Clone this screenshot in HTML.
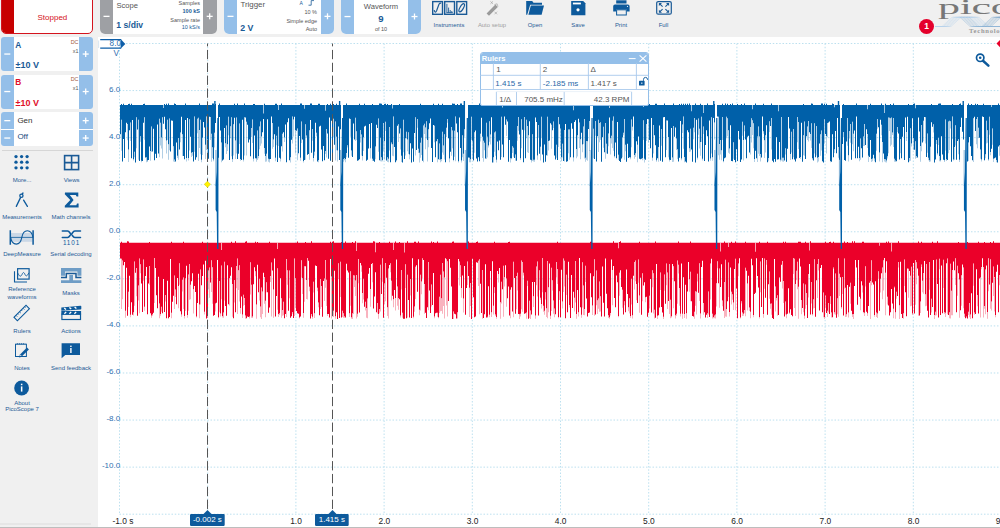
<!DOCTYPE html>
<html><head><meta charset="utf-8">
<style>
*{margin:0;padding:0;box-sizing:border-box}
html,body{width:1000px;height:528px;overflow:hidden;background:#f0f0f0;font-family:"Liberation Sans",sans-serif}
.a{position:absolute;white-space:nowrap}
.btn{position:absolute;background:#94bfe9}
.gbtn{position:absolute;background:#9ea0a4}
.mi{position:absolute;height:1.6px;background:#fff}
.pl{position:absolute;background:#fff}
.t{position:absolute;white-space:nowrap;line-height:1}
.lbl{position:absolute;white-space:nowrap;line-height:1;font-size:6px;color:#1e5a96;text-align:center}
svg{position:absolute;left:0;top:0}
</style></head><body>

<!-- Stopped -->
<div class="a" style="left:1px;top:-6px;width:92px;height:40px;border:1px solid #d4141e;border-radius:5px;background:#fff;overflow:hidden">
  <div style="position:absolute;left:0;top:0;width:12px;height:40px;background:#c70000"></div>
</div>
<div class="t" style="left:37.5px;top:13.6px;font-size:8px;color:#d41020">Stopped</div>

<!-- Scope -->
<div class="a" style="left:100px;top:-6px;width:116.5px;height:39.8px;border-radius:5px;background:#fff;overflow:hidden">
  <div class="gbtn" style="left:0;top:0;width:13px;height:40px"></div>
  <div class="gbtn" style="left:103px;top:0;width:13.5px;height:40px"></div>
</div>
<div class="t" style="left:116.5px;top:1.6px;font-size:7.6px;color:#555">Scope</div>
<div class="t" style="left:116.3px;top:21.2px;font-size:8.6px;color:#1a5a96;font-weight:bold">1 s/div</div>
<div class="t" style="left:150px;width:50px;top:0.5px;font-size:5.5px;color:#555;text-align:right">Samples</div>
<div class="t" style="left:150px;width:50px;top:9.1px;font-size:5.5px;color:#1a5a96;text-align:right;font-weight:bold">100 kS</div>
<div class="t" style="left:150px;width:50px;top:18.3px;font-size:5.5px;color:#555;text-align:right">Sample rate</div>
<div class="t" style="left:150px;width:50px;top:25.1px;font-size:5.5px;color:#1a5a96;text-align:right">10 kS/s</div>

<!-- Trigger -->
<div class="a" style="left:224px;top:-6px;width:110px;height:39.8px;border-radius:5px;background:#fff;overflow:hidden">
  <div class="btn" style="left:0;top:0;width:13px;height:40px"></div>
  <div class="btn" style="left:97px;top:0;width:13px;height:40px"></div>
</div>
<div class="t" style="left:240.4px;top:1.2px;font-size:7.9px;color:#555">Trigger</div>
<div class="t" style="left:240.2px;top:24.4px;font-size:8.8px;color:#1a5a96;font-weight:bold">2 V</div>
<div class="t" style="left:299.5px;top:0.8px;font-size:5px;color:#1a5a96">A</div>
<svg width="1000" height="40" style="left:0;top:0"><path d="M308.5 5.2H311.2V0.6H314" fill="none" stroke="#1a5a96" stroke-width="0.8"/></svg>
<div class="t" style="left:267px;width:50px;top:10px;font-size:5.5px;color:#555;text-align:right">10 %</div>
<div class="t" style="left:267px;width:50px;top:19px;font-size:5.5px;color:#555;text-align:right">Simple edge</div>
<div class="t" style="left:267px;width:50px;top:27.1px;font-size:5.5px;color:#555;text-align:right">Auto</div>

<!-- Waveform -->
<div class="a" style="left:341px;top:-6px;width:80px;height:39.8px;border-radius:5px;background:#fff;overflow:hidden">
  <div class="btn" style="left:0;top:0;width:13px;height:40px"></div>
  <div class="btn" style="left:67px;top:0;width:13px;height:40px"></div>
</div>
<div class="t" style="left:341px;width:80px;top:2.8px;font-size:7.6px;color:#555;text-align:center">Waveform</div>
<div class="t" style="left:341px;width:80px;top:14.2px;font-size:9.6px;color:#1a5a96;text-align:center;font-weight:bold">9</div>
<div class="t" style="left:341px;width:80px;top:26.5px;font-size:5.5px;color:#555;text-align:center">of 10</div>

<!-- plus/minus glyphs on toolbar -->
<svg width="1000" height="150" style="left:0;top:0" fill="#fff">
  <rect x="103.5" y="15.7" width="6" height="1.3"/>
  <rect x="206.7" y="15.7" width="6" height="1.3"/><rect x="209.05" y="13.3" width="1.3" height="6"/>
  <rect x="227.5" y="15.7" width="6" height="1.3"/>
  <rect x="324.5" y="15.7" width="6" height="1.3"/><rect x="326.85" y="13.3" width="1.3" height="6"/>
  <rect x="344.5" y="15.9" width="6" height="1.3"/>
  <rect x="411.5" y="15.9" width="6" height="1.3"/><rect x="413.85" y="13.5" width="1.3" height="6"/>
</svg>

<!-- toolbar icons -->
<svg width="1000" height="36" style="left:0;top:0">
  <g fill="none" stroke="#1a5a96" stroke-width="1.4">
    <rect x="432.7" y="1.6" width="9.8" height="12.7"/>
    <rect x="444.7" y="1.6" width="9.8" height="12.7"/>
    <rect x="456.8" y="1.6" width="9.8" height="12.7"/>
  </g>
  <g fill="none" stroke="#1a5a96" stroke-width="1.2">
    <path d="M434.2 10.2Q435.2 14 436.6 10.8L438.8 4.8Q439.6 2.6 441.2 3.4"/>
    <path d="M446.9 12.6V3.8M448.6 12.6V7.6M450.2 12.6V10M451.8 12.6V11M446.4 12.6H452.8" stroke-width="0.9"/>
    <ellipse cx="461.7" cy="7.8" rx="1.7" ry="4.6" transform="rotate(30 461.7 7.8)"/>
  </g>
  <!-- auto setup -->
  <g>
    <path d="M486.6 13.4L495.4 4.6L497.8 7L489 15.8Z" fill="#9a9a9a"/>
    <path d="M494.4 4.6L497.1 3.8L498 6.6" fill="none" stroke="#9a9a9a" stroke-width="0.6"/>
    <path d="M490.4 1.3L493 3.9M493 1.3L490.4 3.9M494.5 11.7L497.1 14.3M497.1 11.7L494.5 14.3" stroke="#9a9a9a" stroke-width="0.6"/>
  </g>
  <!-- open -->
  <path d="M526.2 14.8V1H532.2L533.5 2.7H542V4.7H530.2L527.2 14.8Z" fill="#0d5a9c"/>
  <path d="M528.4 14.8L530.8 5.6H544L541.6 14.8Z" fill="#0d5a9c"/>
  <!-- save -->
  <path d="M571.2 1H583.2L585.4 3.2V15.2H571.2Z" fill="#0d5a9c"/>
  <rect x="572.9" y="2.6" width="8" height="1.8" fill="#fff"/>
  <circle cx="578" cy="9.8" r="1.6" fill="#fff"/>
  <!-- print -->
  <rect x="616.2" y="0.3" width="10.3" height="3.2" fill="#0d5a9c"/>
  <path d="M613.2 6.2Q613.2 4.4 615 4.4H627.8Q629.6 4.4 629.6 6.2V11.4H626.7V9.4H616.1V11.4H613.2Z" fill="#0d5a9c"/>
  <rect x="616.6" y="9.8" width="9.7" height="5.2" fill="none" stroke="#0d5a9c" stroke-width="1"/>
  <circle cx="627.5" cy="6.3" r="0.6" fill="#fff"/>
  <!-- full -->
  <rect x="656.7" y="1.6" width="14.6" height="12.6" rx="1.5" fill="none" stroke="#1a5a96" stroke-width="1.2"/>
  <g fill="#1a5a96">
    <path d="M658.9 3H662L658.9 6.1Z"/><path d="M669.1 3H666L669.1 6.1Z"/>
    <path d="M658.9 12.8H662L658.9 9.7Z"/><path d="M669.1 12.8H666L669.1 9.7Z"/>
  </g>
  <g stroke="#1a5a96" stroke-width="1.1" fill="none">
    <path d="M660 4.1L662.6 6.7M668 4.1L665.4 6.7M660 11.7L662.6 9.1M668 11.7L665.4 9.1"/>
  </g>
</svg>
<div class="lbl" style="left:419px;width:60px;top:22.5px;font-size:5.9px">Instruments</div>
<div class="lbl" style="left:462px;width:60px;top:22.5px;font-size:5.9px;color:#a0a0a0">Auto setup</div>
<div class="lbl" style="left:505px;width:60px;top:22.5px;font-size:5.9px">Open</div>
<div class="lbl" style="left:548px;width:60px;top:22.5px;font-size:5.9px">Save</div>
<div class="lbl" style="left:591px;width:60px;top:22.5px;font-size:5.9px">Print</div>
<div class="lbl" style="left:633.5px;width:60px;top:22.5px;font-size:5.9px">Full</div>

<!-- pico logo -->
<svg width="70" height="36" style="left:930px;top:0">
  <g fill="none" stroke-width="0.4">
    <path d="M5 26.5H12.0L22.0 17.3H40.0L50.0 26.5H72" stroke="#b5d2ea"/>
    <path d="M5 26.5H13.5L23.5 17.3H41.5L51.5 26.5H72" stroke="#b5d2ea"/>
    <path d="M5 26.5H15.0L25.0 17.3H43.0L53.0 26.5H72" stroke="#b5d2ea"/>
    <path d="M5 26.5H16.5L26.5 17.3H44.5L54.5 26.5H72" stroke="#b5d2ea"/>
    <path d="M5 26.5H18.0L28.0 17.3H46.0L56.0 26.5H72" stroke="#b5d2ea"/>
    <path d="M5 26.5H19.5L29.5 17.3H47.5L57.5 26.5H72" stroke="#b5d2ea"/>
    <path d="M5 26.5H21.0L31.0 17.3H49.0L59.0 26.5H72" stroke="#b5d2ea"/>
    <path d="M30.0 17.3L40.0 26.5H72" stroke="#8fb5d6"/>
    <path d="M31.5 17.3L41.5 26.5H72" stroke="#8fb5d6"/>
    <path d="M33.0 17.3L43.0 26.5H72" stroke="#8fb5d6"/>
    <path d="M34.5 17.3L44.5 26.5H72" stroke="#8fb5d6"/>
    <path d="M36.0 17.3L46.0 26.5H72" stroke="#8fb5d6"/>
    <path d="M37.5 17.3L47.5 26.5H72" stroke="#8fb5d6"/>
    <path d="M39.0 17.3L49.0 26.5H72" stroke="#8fb5d6"/>
    <path d="M52.0 26.5L62.0 17.3H72" stroke="#7fa8cc"/>
    <path d="M53.5 26.5L63.5 17.3H72" stroke="#7fa8cc"/>
    <path d="M55.0 26.5L65.0 17.3H72" stroke="#7fa8cc"/>
    <path d="M56.5 26.5L66.5 17.3H72" stroke="#7fa8cc"/>
    <path d="M58.0 26.5L68.0 17.3H72" stroke="#7fa8cc"/>
    <path d="M59.5 26.5L69.5 17.3H72" stroke="#7fa8cc"/>
    <path d="M61.0 26.5L71.0 17.3H72" stroke="#7fa8cc"/>
  </g>
</svg>
<div class="t" style="left:937.8px;top:-3.85px;font-family:'Liberation Serif',serif;font-size:22px;color:#777;transform:scaleX(2.0);transform-origin:0 0;letter-spacing:-0.15px">pico</div>
<div class="t" style="left:969px;top:27.6px;font-family:'Liberation Serif',serif;font-weight:bold;font-size:6.6px;color:#9a9a9a;letter-spacing:0.75px">Technology</div>
<div class="a" style="left:919.2px;top:19.1px;width:15px;height:15px;border-radius:50%;background:#e4002b"></div>
<div class="t" style="left:919.2px;width:15px;top:22.3px;font-size:8.5px;font-weight:bold;color:#fff;text-align:center">1</div>

<!-- Channel A -->
<div class="a" style="left:1px;top:37px;width:92px;height:34px;border-radius:3px;background:#fff;overflow:hidden">
  <div class="btn" style="left:0;top:0;width:13px;height:34px"></div>
  <div class="btn" style="left:78px;top:0;width:14px;height:34px"></div>
</div>
<div class="t" style="left:15.2px;top:40.5px;font-size:8.3px;font-weight:bold;color:#1a5a96">A</div>
<div class="t" style="left:15.5px;top:60.5px;font-size:9px;font-weight:bold;color:#1a5a96">±10 V</div>
<div class="t" style="left:40px;width:38.5px;top:39.5px;font-size:5.4px;color:#a0583c;text-align:right">DC</div>
<div class="t" style="left:40px;width:38.5px;top:48.5px;font-size:5.4px;color:#555;text-align:right">x1</div>

<!-- Channel B -->
<div class="a" style="left:1px;top:74.5px;width:92px;height:34px;border-radius:3px;background:#fff;overflow:hidden">
  <div class="btn" style="left:0;top:0;width:13px;height:34px"></div>
  <div class="btn" style="left:78px;top:0;width:14px;height:34px"></div>
</div>
<div class="t" style="left:15.2px;top:78.2px;font-size:8.3px;font-weight:bold;color:#e0102a">B</div>
<div class="t" style="left:15.5px;top:99px;font-size:9px;font-weight:bold;color:#e0102a">±10 V</div>
<div class="t" style="left:40px;width:38.5px;top:77px;font-size:5.4px;color:#a0583c;text-align:right">DC</div>
<div class="t" style="left:40px;width:38.5px;top:86px;font-size:5.4px;color:#555;text-align:right">x1</div>

<!-- Gen / Off -->
<div class="a" style="left:1px;top:112px;width:92px;height:34px;border-radius:3px;background:#fff;overflow:hidden">
  <div class="btn" style="left:0;top:0;width:13px;height:16.5px"></div>
  <div class="btn" style="left:78px;top:0;width:14px;height:16.5px"></div>
  <div class="btn" style="left:0;top:18px;width:13px;height:16px"></div>
  <div class="btn" style="left:78px;top:18px;width:14px;height:16px"></div>
</div>
<div class="t" style="left:17.4px;top:116.5px;font-size:8px;color:#333">Gen</div>
<div class="t" style="left:17.4px;top:133px;font-size:8px;color:#1a4a80">Off</div>

<svg width="100" height="150" style="left:0;top:0" fill="#fff">
  <rect x="4.3" y="53.4" width="6" height="1.3"/>
  <rect x="82.7" y="53.4" width="6" height="1.3"/><rect x="85.05" y="51" width="1.3" height="6"/>
  <rect x="4.3" y="90.9" width="6" height="1.3"/>
  <rect x="82.7" y="90.9" width="6" height="1.3"/><rect x="85.05" y="88.5" width="1.3" height="6"/>
  <rect x="4.3" y="120" width="6" height="1.3"/>
  <rect x="82.7" y="120" width="6" height="1.3"/><rect x="85.05" y="117.6" width="1.3" height="6"/>
  <rect x="4.3" y="137.4" width="6" height="1.3"/>
  <rect x="82.7" y="137.4" width="6" height="1.3"/><rect x="85.05" y="135" width="1.3" height="6"/>
</svg>

<div class="a" style="left:2px;top:149.5px;width:91px;height:1px;background:#d6d6d6"></div>

<!-- side icons -->
<svg width="100" height="420" style="left:0;top:0">
  <g fill="#0d5a9c">
    <circle cx="16" cy="156.6" r="1.65"/><circle cx="21.6" cy="156.6" r="1.65"/><circle cx="27.1" cy="156.6" r="1.65"/>
    <circle cx="16" cy="162.2" r="1.65"/><circle cx="21.6" cy="162.2" r="1.65"/><circle cx="27.1" cy="162.2" r="1.65"/>
    <circle cx="16" cy="167.8" r="1.65"/><circle cx="21.6" cy="167.8" r="1.65"/><circle cx="27.1" cy="167.8" r="1.65"/>
  </g>
  <g fill="none" stroke="#1a5a96" stroke-width="1.6">
    <rect x="64.6" y="155.6" width="14" height="14"/>
    <path d="M71.6 155.6V169.6M64.6 162.6H78.6"/>
  </g>
  <!-- measurements (compass) -->
  <g fill="none" stroke="#0d5a9c" stroke-width="1.3">
    <circle cx="21.4" cy="195.7" r="1.6"/>
    <path d="M20.5 197.6L16.3 206.4M23.6 200.1L27.4 206.4M22.2 194L23 193" stroke-linecap="round"/>
  </g>
  <!-- sigma -->
  <path d="M65 192.6H78.3V196.5H76.6L75.8 194.9H69.8L73.6 200L69.4 205.2H76.3L77 203.5H78.6V207.5H64.8V205.8L70.3 200L64.8 194.2Z" fill="#0d5a9c"/>
  <!-- deepmeasure -->
  <g>
    <rect x="11" y="233" width="21.5" height="8.8" fill="#cbd8e6"/>
    <path d="M10.3 237.4H33.1" stroke="#0d5a9c" stroke-width="0.8"/>
    <path d="M10.3 230.2V244.7M33.1 230.2V244.7" stroke="#0d5a9c" stroke-width="1.5"/>
    <path d="M10.6 237.4C12.3 246.3 20.2 246.3 21.8 237.4C23.4 228.5 31.3 228.5 33 237.4" fill="none" stroke="#0d5a9c" stroke-width="1.1"/>
  </g>
  <!-- serial decoding -->
  <g fill="none" stroke="#0d5a9c" stroke-width="1.5" stroke-linecap="round">
    <path d="M62.3 230.9H67.6C69.6 230.9 70.2 234.25 71.2 234.25C72.2 234.25 72.8 230.9 74.8 230.9H80.5M62.3 237.6H67.6C69.6 237.6 70.2 234.25 71.2 234.25C72.2 234.25 72.8 237.6 74.8 237.6H80.5"/>
  </g>
  <text x="71.5" y="244.8" font-family="Liberation Sans" font-size="6.3" fill="#0d5a9c" text-anchor="middle" letter-spacing="0.9">1101</text>
  <!-- reference waveforms -->
  <g fill="none" stroke="#0d5a9c">
    <path d="M14.5 271.2V282H27" stroke-width="1.1"/>
    <rect x="17.6" y="268.7" width="11.5" height="10.4" stroke-width="1.2"/>
    <path d="M18 273.3C19.5 276.8 20.8 277 22 274.5C23 272 24 271.8 25 274.5C26 276.8 27.5 276 28.8 272.8" stroke-width="0.9"/>
  </g>
  <!-- masks -->
  <path d="M61 268H81.4V275.8H77.4V271.6H65V275.8H61Z" fill="#6f9dc6"/>
  <path d="M61 280.2H69.3V275H73V280.2H81.4V282.9H61Z" fill="#6f9dc6"/>
  <path d="M61 277.6H66.3V273.4H76V277.6H81.4" fill="none" stroke="#1a5a96" stroke-width="1.5"/>
  <!-- rulers -->
  <g transform="rotate(-45 21.7 313)">
    <rect x="13.2" y="310.6" width="17" height="4.8" fill="none" stroke="#0d5a9c" stroke-width="1.1"/>
    <path d="M16 310.6V312.6M18.5 310.6V312M21 310.6V312.6M23.5 310.6V312M26 310.6V312.6M28.3 310.6V312" stroke="#0d5a9c" stroke-width="0.7"/>
  </g>
  <!-- actions clapper -->
  <g>
    <path d="M61.3 307.6L80.6 305.8Q81.3 305.8 81.3 306.5V308.7Q81.3 309.4 80.6 309.5L61.3 310.8Z" fill="#0d5a9c"/>
    <rect x="61.3" y="311" width="19.8" height="3.7" fill="#0d5a9c"/>
    <rect x="61.9" y="314.2" width="18.6" height="5.3" fill="none" stroke="#0d5a9c" stroke-width="1.2"/>
    <path d="M64.2 308L66 309.6M69.4 307.4L71.2 309M74.6 306.9L76.4 308.5M64.4 313.8L66.2 311.9M69.4 313.8L71.2 311.9M74.4 313.8L76.2 311.9" stroke="#fff" stroke-width="1.3"/>
  </g>
  <!-- notes -->
  <rect x="15.5" y="344.2" width="10.9" height="12.3" fill="none" stroke="#0d5a9c" stroke-width="1"/>
  <path d="M16.8 343.8H25.2" stroke="#0d5a9c" stroke-width="0.9" stroke-dasharray="1.2 0.8"/>
  <path d="M20.3 354.2L27 347.5L28.9 349.4L22.2 356.1Z" fill="#0d5a9c"/>
  <path d="M20.3 354.2L22.2 356.1L19.4 357.2Z" fill="none" stroke="#0d5a9c" stroke-width="0.6"/>
  <!-- send feedback -->
  <path d="M61.6 343.2H80V355H65.3L61.6 358.2Z" fill="#0d5a9c"/>
  <rect x="70.2" y="348" width="1.4" height="5" fill="#fff"/><rect x="70.2" y="345.6" width="1.4" height="1.4" fill="#fff"/>
  <!-- about -->
  <circle cx="21.6" cy="388" r="7.4" fill="#0d5a9c"/>
  <rect x="20.9" y="386.4" width="1.5" height="5.2" fill="#fff"/><rect x="20.9" y="383.7" width="1.5" height="1.5" fill="#fff"/>
</svg>
<div class="lbl" style="left:-3px;width:50px;top:177.2px">More...</div>
<div class="lbl" style="left:46.6px;width:50px;top:177.2px">Views</div>
<div class="lbl" style="left:-3px;width:50px;top:214.3px">Measurements</div>
<div class="lbl" style="left:46px;width:50px;top:214.3px">Math channels</div>
<div class="lbl" style="left:-3px;width:50px;top:251.3px">DeepMeasure</div>
<div class="lbl" style="left:46px;width:50px;top:251.3px">Serial decoding</div>
<div class="lbl" style="left:-3px;width:50px;top:286px">Reference</div>
<div class="lbl" style="left:-3px;width:50px;top:293.8px">waveforms</div>
<div class="lbl" style="left:46px;width:50px;top:289.6px">Masks</div>
<div class="lbl" style="left:-3px;width:50px;top:327.6px">Rulers</div>
<div class="lbl" style="left:46px;width:50px;top:327.6px">Actions</div>
<div class="lbl" style="left:-3px;width:50px;top:365.3px">Notes</div>
<div class="lbl" style="left:46px;width:50px;top:365.3px">Send feedback</div>
<div class="lbl" style="left:-3px;width:50px;top:399.5px">About</div>
<div class="lbl" style="left:-3px;width:50px;top:406.4px">PicoScope 7</div>

<div class="a" style="left:0;top:522.8px;width:91px;height:2px;background:#e6e6e6"></div>

<!-- Plot area -->
<div class="a" style="left:97.6px;top:36.6px;width:903px;height:491px;background:#fff"></div>
<svg width="1000" height="528" style="left:0;top:0">
  <g stroke="#bce0ef" stroke-width="1" stroke-dasharray="1.5 1.75"><line x1="119.5" y1="43.5" x2="1000" y2="43.5"/><line x1="119.5" y1="90.57" x2="1000" y2="90.57"/><line x1="119.5" y1="137.64" x2="1000" y2="137.64"/><line x1="119.5" y1="184.71" x2="1000" y2="184.71"/><line x1="119.5" y1="231.78" x2="1000" y2="231.78"/><line x1="119.5" y1="278.85" x2="1000" y2="278.85"/><line x1="119.5" y1="325.92" x2="1000" y2="325.92"/><line x1="119.5" y1="372.99" x2="1000" y2="372.99"/><line x1="119.5" y1="420.06" x2="1000" y2="420.06"/><line x1="119.5" y1="467.13" x2="1000" y2="467.13"/><line x1="119.5" y1="514.2" x2="1000" y2="514.2"/><line x1="119.5" y1="43.5" x2="119.5" y2="514.5"/><line x1="207.7" y1="43.5" x2="207.7" y2="514.5"/><line x1="295.9" y1="43.5" x2="295.9" y2="514.5"/><line x1="384.1" y1="43.5" x2="384.1" y2="514.5"/><line x1="472.3" y1="43.5" x2="472.3" y2="514.5"/><line x1="560.5" y1="43.5" x2="560.5" y2="514.5"/><line x1="648.7" y1="43.5" x2="648.7" y2="514.5"/><line x1="736.9" y1="43.5" x2="736.9" y2="514.5"/><line x1="825.1" y1="43.5" x2="825.1" y2="514.5"/><line x1="913.3" y1="43.5" x2="913.3" y2="514.5"/></g>
  <path d="M121 119.86h1V150.71h-1ZM127 123.99h1V140.14h-1ZM128 149.46h1V162.11h-1ZM130 122.43h1V140.97h-1ZM133 159.3h1V160.58h-1ZM134 151.73h1V157.34h-1ZM136 117.34h1V148.28h-1ZM138 119.81h1V159.72h-1ZM140 136.34h1V141.7h-1ZM141 160.87h1V162.29h-1ZM144 117.13h1V139.7h-1ZM146 157.17h1V162.16h-1ZM147 160.49h1V162.1h-1ZM150 150.91h1V160.74h-1ZM151 126.5h1V151.94h-1ZM159 118.63h1V157.37h-1ZM160 122.66h1V145.47h-1ZM161 137.45h1V148.62h-1ZM162 117.36h1V158.4h-1ZM166 140.47h1V153.55h-1ZM167 119.71h1V140.05h-1ZM168 144.33h1V159.76h-1ZM169 118.48h1V150.18h-1ZM173 146.26h1V161.46h-1ZM174 159.41h1V161.98h-1ZM177 155.63h1V158.02h-1ZM178 138.11h1V159.76h-1ZM180 132.56h1V142.3h-1ZM182 134.37h1V156.09h-1ZM186 158.05h1V161.47h-1ZM188 158.07h1V160.55h-1ZM189 119.2h1V150.58h-1ZM191 152.79h1V157.12h-1ZM192 151.89h1V155.79h-1ZM194 116.6h1V151.73h-1ZM197 118.87h1V133.21h-1ZM198 117.74h1V160.97h-1ZM199 130h1V148.01h-1ZM200 119.77h1V154.36h-1ZM201 159.81h1V162.3h-1ZM202 137.63h1V155.02h-1ZM205 144.83h1V158.91h-1ZM206 116.55h1V150.12h-1ZM207 139.51h1V156.69h-1ZM210 116.98h1V139.92h-1ZM211 133.76h1V161.84h-1ZM212 147.32h1V157.91h-1ZM213 159.58h1V161.37h-1ZM214 132.68h1V147.42h-1ZM221 142.5h1V162.2h-1ZM225 143.13h1V147.36h-1ZM226 125.61h1V153.92h-1ZM227 144.17h1V151.1h-1ZM228 116.83h1V135.14h-1ZM230 126.15h1V138.37h-1ZM231 117.36h1V156.28h-1ZM232 159.32h1V162.06h-1ZM233 124.36h1V155.43h-1ZM235 140.51h1V158.91h-1ZM236 117.49h1V153.43h-1ZM239 123.62h1V144.08h-1ZM240 158.98h1V160.71h-1ZM243 159.83h1V161.62h-1ZM244 117.19h1V155.54h-1ZM246 121.65h1V155.53h-1ZM251 128.09h1V137.04h-1ZM252 119.41h1V143.08h-1ZM253 158.68h1V161.5h-1ZM256 158.53h1V161.8h-1ZM257 130.55h1V159.94h-1ZM258 156.12h1V158.34h-1ZM259 126.61h1V149.19h-1ZM260 121.4h1V145.72h-1ZM261 136.47h1V143.59h-1ZM264 148.04h1V153.82h-1ZM265 156.03h1V161.84h-1ZM266 153.65h1V161.39h-1ZM268 158.67h1V161.7h-1ZM269 159.16h1V162.42h-1ZM272 123.12h1V148.7h-1ZM273 139.54h1V146.98h-1ZM275 157.76h1V161.37h-1ZM276 135.81h1V145.25h-1ZM278 126.65h1V145.92h-1ZM280 158.81h1V161.54h-1ZM282 133.68h1V151.43h-1ZM284 137.52h1V141.9h-1ZM290 157.16h1V162.45h-1ZM292 116.59h1V143.57h-1ZM293 119.56h1V136.45h-1ZM295 130.13h1V153.39h-1ZM297 128.6h1V160.22h-1ZM298 152.89h1V154.15h-1ZM300 157.67h1V160.65h-1ZM301 121.45h1V142.9h-1ZM303 161.1h1V162.4h-1ZM305 124.33h1V159.65h-1ZM306 135.46h1V137.84h-1ZM309 130.24h1V159.73h-1ZM312 129.07h1V140.77h-1ZM313 157.98h1V161.38h-1ZM314 151.7h1V155.55h-1ZM316 132.75h1V136.16h-1ZM318 160.01h1V162.32h-1ZM325 151.01h1V154.08h-1ZM326 128.92h1V157.61h-1ZM332 157.95h1V160.57h-1ZM333 118.75h1V137.5h-1ZM335 121.53h1V160.54h-1ZM336 136.71h1V150.36h-1ZM337 150.51h1V161.53h-1ZM343 159.09h1V161.72h-1ZM344 157.98h1V160.33h-1ZM345 158.97h1V162.34h-1ZM346 153.06h1V157.33h-1ZM347 145.13h1V147.41h-1ZM350 118.89h1V136.79h-1ZM351 150.6h1V155.63h-1ZM355 117.64h1V140.95h-1ZM356 131.33h1V139.92h-1ZM360 130.09h1V142.49h-1ZM361 134.51h1V155.61h-1ZM362 155.97h1V160.41h-1ZM363 137.2h1V150.88h-1ZM370 148.18h1V158.45h-1ZM372 158.77h1V161.11h-1ZM375 146.58h1V159.18h-1ZM378 118.38h1V151.69h-1ZM380 137.74h1V161.33h-1ZM381 157.21h1V161.46h-1ZM382 159.97h1V161.24h-1ZM383 122.9h1V151.17h-1ZM384 140.97h1V159.39h-1ZM385 121.83h1V131.07h-1ZM387 157.26h1V162.1h-1ZM388 158.64h1V162.13h-1ZM389 127.04h1V150.39h-1ZM391 142.62h1V144.2h-1ZM392 144.18h1V155.68h-1ZM393 116.55h1V156.2h-1ZM396 160.16h1V161.37h-1ZM398 124.22h1V142.02h-1ZM400 128.46h1V149.49h-1ZM401 155.83h1V161.93h-1ZM403 119.67h1V152.27h-1ZM405 138.37h1V155.56h-1ZM406 131.68h1V138.43h-1ZM407 139.47h1V151.27h-1ZM408 132.15h1V154.05h-1ZM409 154.55h1V159.23h-1ZM415 117.34h1V155.53h-1ZM417 119h1V127.7h-1ZM418 148.73h1V152.9h-1ZM419 152.74h1V162.42h-1ZM420 142.77h1V157.65h-1ZM421 137.65h1V155.09h-1ZM423 125.55h1V162.37h-1ZM424 123.81h1V133.89h-1ZM425 127.57h1V149.27h-1ZM426 121.32h1V138.42h-1ZM427 140.06h1V161.45h-1ZM428 129.21h1V147.32h-1ZM434 125.71h1V142.14h-1ZM437 138.99h1V162.33h-1ZM439 143.55h1V159.92h-1ZM440 159.57h1V162.21h-1ZM441 158.92h1V161.23h-1ZM442 131.79h1V152.46h-1ZM443 145.51h1V154.67h-1ZM444 134.15h1V159.47h-1ZM446 127.75h1V137.12h-1ZM447 119.12h1V122.72h-1ZM449 158.42h1V162.27h-1ZM451 126.98h1V155.73h-1ZM452 130.44h1V148.21h-1ZM453 159.89h1V161.27h-1ZM454 130.75h1V156.7h-1ZM455 116.53h1V161.23h-1ZM458 161.37h1V162.39h-1ZM461 160.43h1V162.39h-1ZM462 135.19h1V157.24h-1ZM463 153.65h1V161.1h-1ZM464 129.18h1V136.64h-1ZM469 157.63h1V162.34h-1ZM470 159.27h1V162.13h-1ZM471 116.74h1V139.88h-1ZM472 140.73h1V159h-1ZM473 160.21h1V161.3h-1ZM474 132.37h1V152.8h-1ZM480 133.83h1V141.49h-1ZM482 136.65h1V158.08h-1ZM483 140.72h1V161.75h-1ZM484 142.73h1V150.2h-1ZM486 122.69h1V158.91h-1ZM487 136.63h1V157.46h-1ZM488 145.39h1V147.61h-1ZM489 121.27h1V141.85h-1ZM490 134.52h1V144.59h-1ZM493 157.14h1V162.44h-1ZM494 132.42h1V151.63h-1ZM495 131.42h1V155.75h-1ZM496 159.67h1V162.45h-1ZM501 116.66h1V156.89h-1ZM506 119.62h1V136.02h-1ZM510 158.18h1V162.47h-1ZM511 158.22h1V159.27h-1ZM512 146.24h1V153.03h-1ZM513 147.83h1V156.85h-1ZM515 154.5h1V160.82h-1ZM517 126.11h1V140.78h-1ZM518 116.96h1V130.82h-1ZM520 158.21h1V160.1h-1ZM521 119.22h1V148.36h-1ZM524 117h1V130.33h-1ZM526 119.8h1V138.37h-1ZM527 126h1V152.23h-1ZM528 135.24h1V152.95h-1ZM531 160.2h1V162.41h-1ZM532 134.2h1V160.95h-1ZM533 159.72h1V161.61h-1ZM534 159.73h1V161.76h-1ZM537 155.43h1V159.67h-1ZM538 124.98h1V137.78h-1ZM540 146.85h1V160.41h-1ZM541 116.65h1V138.33h-1ZM547 116.65h1V155.72h-1ZM548 140.99h1V150.59h-1ZM551 124.64h1V148.68h-1ZM553 121.52h1V127.89h-1ZM556 144.67h1V157.73h-1ZM558 117.08h1V147.02h-1ZM560 128.54h1V148.7h-1ZM561 157.37h1V161.34h-1ZM562 143.67h1V157.59h-1ZM564 130.07h1V161.44h-1ZM568 129.4h1V153.19h-1ZM569 129.49h1V159.66h-1ZM573 157.55h1V161.45h-1ZM576 148.93h1V158.31h-1ZM577 135.14h1V156.57h-1ZM579 122.58h1V148.12h-1ZM580 139.36h1V159.26h-1ZM582 144.48h1V152.24h-1ZM583 126.42h1V144.01h-1ZM584 118.92h1V158.54h-1ZM585 157.63h1V161.77h-1ZM586 141.04h1V159.7h-1ZM587 141.25h1V160.66h-1ZM589 120.97h1V150.68h-1ZM593 128.85h1V158.33h-1ZM595 121.06h1V135.82h-1ZM598 119.64h1V151.92h-1ZM599 123.08h1V142.2h-1ZM600 122.14h1V139.94h-1ZM603 126.81h1V147.8h-1ZM605 122.96h1V158.79h-1ZM606 143.69h1V153.55h-1ZM608 133.46h1V146.25h-1ZM610 138.14h1V154.42h-1ZM611 135.77h1V143.61h-1ZM612 120.77h1V148.01h-1ZM613 116.6h1V150.8h-1ZM614 156.17h1V157.44h-1ZM616 158.09h1V159.33h-1ZM618 154.78h1V159.95h-1ZM622 137.55h1V157.33h-1ZM623 132.87h1V135.29h-1ZM624 118.92h1V159.86h-1ZM625 144.86h1V151.34h-1ZM630 157.6h1V159.14h-1ZM631 119.42h1V147.24h-1ZM632 126.73h1V130.47h-1ZM634 155.06h1V158.86h-1ZM635 153.13h1V157.02h-1ZM637 144.85h1V162.25h-1ZM642 157.99h1V160.22h-1ZM643 120.25h1V140.08h-1ZM644 158.79h1V162.48h-1ZM646 124.08h1V141.11h-1ZM648 119.26h1V142.58h-1ZM652 157.87h1V160.85h-1ZM653 125.05h1V153.38h-1ZM656 160.3h1V161.67h-1ZM658 147.01h1V161.63h-1ZM661 129.04h1V145.66h-1ZM666 120.47h1V149.98h-1ZM668 137.06h1V157.35h-1ZM669 159.76h1V161.56h-1ZM672 157.51h1V161.88h-1ZM673 125.98h1V161.85h-1ZM676 138.54h1V150.08h-1ZM677 149.29h1V158.98h-1ZM681 158.58h1V160.18h-1ZM682 124.38h1V133.02h-1ZM683 116.58h1V148.65h-1ZM684 157.07h1V162.2h-1ZM689 148.22h1V151.92h-1ZM690 128.81h1V151.38h-1ZM693 127.73h1V139.13h-1ZM694 117.98h1V132.28h-1ZM697 157.65h1V159.39h-1ZM698 118.43h1V134.71h-1ZM699 128.73h1V148.57h-1ZM700 141.89h1V155.74h-1ZM701 116.75h1V141.92h-1ZM702 158.73h1V160.39h-1ZM703 126.48h1V133.93h-1ZM710 158.56h1V160.7h-1ZM711 117.31h1V153.61h-1ZM712 157.26h1V160.69h-1ZM714 122.44h1V139.55h-1ZM718 116.66h1V155.37h-1ZM719 144.05h1V159.73h-1ZM720 139.91h1V154.46h-1ZM721 150.14h1V160.26h-1ZM722 116.97h1V139.9h-1ZM723 161.14h1V162.24h-1ZM726 116.76h1V138.17h-1ZM727 118.35h1V136.16h-1ZM728 130.26h1V152.7h-1ZM729 148.44h1V153.68h-1ZM733 142.17h1V158.74h-1ZM742 121.63h1V135.86h-1ZM743 140.06h1V160.38h-1ZM744 125.42h1V131.27h-1ZM750 127h1V154.4h-1ZM751 118.36h1V142.53h-1ZM752 120.16h1V135.12h-1ZM753 123.16h1V148.18h-1ZM754 158.91h1V162.02h-1ZM757 136.4h1V161.92h-1ZM758 126.6h1V153.7h-1ZM759 136.52h1V156.04h-1ZM760 153.93h1V161.41h-1ZM763 131.3h1V133.84h-1ZM764 140.13h1V157.92h-1ZM765 135.13h1V152.58h-1ZM768 157.88h1V161.16h-1ZM769 121.27h1V132.05h-1ZM771 117.9h1V149.43h-1ZM780 159.64h1V161.53h-1ZM781 116.97h1V160.41h-1ZM782 157.83h1V161.56h-1ZM783 157.68h1V161.82h-1ZM785 148.31h1V154.48h-1ZM790 154.07h1V160.08h-1ZM791 131.72h1V152.47h-1ZM793 128.9h1V157.37h-1ZM797 116.95h1V142.24h-1ZM798 122.09h1V148.98h-1ZM800 157.06h1V159.1h-1ZM803 135.3h1V155.35h-1ZM804 121.53h1V155.86h-1ZM807 126.38h1V139.96h-1ZM808 121.02h1V141.58h-1ZM810 133.89h1V140.51h-1ZM811 123.22h1V148.02h-1ZM812 158.24h1V159.63h-1ZM814 123.3h1V153.49h-1ZM816 126.12h1V155.43h-1ZM817 157.69h1V162.48h-1ZM818 157.08h1V161.38h-1ZM820 134.24h1V155.7h-1ZM821 130.62h1V150.55h-1ZM822 160.91h1V161.91h-1ZM824 119.3h1V143.66h-1ZM826 136.12h1V153.42h-1ZM827 123.04h1V137.22h-1ZM830 160.91h1V162.13h-1ZM834 149.3h1V153.04h-1ZM838 147.08h1V157.71h-1ZM843 131.9h1V137.34h-1ZM847 117.91h1V145.65h-1ZM848 155.28h1V161.54h-1ZM849 131.12h1V138.41h-1ZM850 124.05h1V142.73h-1ZM852 121.72h1V144.34h-1ZM853 133.81h1V151.28h-1ZM859 158.02h1V161.14h-1ZM860 138.45h1V159.77h-1ZM863 136.52h1V146.07h-1ZM864 124.12h1V145.99h-1ZM867 134.09h1V148.1h-1ZM868 155.76h1V162.03h-1ZM871 159.07h1V162.05h-1ZM872 158.4h1V161.2h-1ZM874 158.59h1V161.32h-1ZM876 133.82h1V150.74h-1ZM877 118.94h1V128.72h-1ZM879 152.57h1V161.4h-1ZM881 124.7h1V135.21h-1ZM882 141.93h1V162.13h-1ZM884 158.99h1V161.51h-1ZM885 159.31h1V162.14h-1ZM886 160.39h1V162.43h-1ZM887 156.16h1V158.51h-1ZM888 117.45h1V153.35h-1ZM889 117.69h1V131.04h-1ZM890 118.13h1V146.37h-1ZM891 117.45h1V144.81h-1ZM892 132.52h1V134.96h-1ZM893 117.96h1V146.88h-1ZM894 158.82h1V161.78h-1ZM895 160.52h1V162.03h-1ZM897 126.9h1V131.9h-1ZM900 138.93h1V153.22h-1ZM906 131.96h1V141.12h-1ZM909 157.91h1V161.29h-1ZM910 128.16h1V160.73h-1ZM911 143.46h1V146.41h-1ZM913 138h1V150.1h-1ZM915 141.35h1V158.65h-1ZM916 156.11h1V157.89h-1ZM920 146.12h1V161.82h-1ZM921 125.12h1V151.3h-1ZM923 120.75h1V141.28h-1ZM925 117.17h1V143.6h-1ZM927 133.4h1V152.81h-1ZM928 157.84h1V160.15h-1ZM929 160.33h1V162.1h-1ZM930 146.75h1V161.52h-1ZM933 124.18h1V132.4h-1ZM936 140.12h1V143.89h-1ZM937 153.6h1V155.27h-1ZM938 137.87h1V145.03h-1ZM939 155.95h1V161.35h-1ZM940 160.26h1V161.44h-1ZM944 160.2h1V162h-1ZM945 119.54h1V150.56h-1ZM946 159.25h1V161.12h-1ZM948 121.46h1V153.26h-1ZM949 120.65h1V149.92h-1ZM950 121.28h1V128.6h-1ZM952 116.52h1V139.05h-1ZM953 159.45h1V160.55h-1ZM954 146.88h1V159.68h-1ZM955 125.31h1V145.54h-1ZM958 139.23h1V154.23h-1ZM959 159.75h1V161.92h-1ZM968 142.49h1V160.98h-1ZM973 118.34h1V161.89h-1ZM976 118.94h1V144.23h-1ZM977 117h1V148.29h-1ZM978 127.8h1V137.84h-1ZM980 149.49h1V158.74h-1ZM981 159.4h1V161.47h-1ZM984 159.91h1V160.98h-1ZM985 154.27h1V158.22h-1ZM986 120.63h1V143.46h-1ZM987 130.2h1V142.63h-1ZM988 159.49h1V160.76h-1ZM989 116.84h1V134.8h-1ZM990 151.9h1V155.19h-1ZM992 128.38h1V144.75h-1ZM993 158.74h1V162.09h-1ZM996 159.99h1V162.25h-1ZM999 145.18h1V155.67h-1Z" fill="#0060a9" fill-opacity="0.3"/>
  <path d="M120 104.9H216V122.89H215V132.68H214V159.58H213V147.32H212V133.76H211V116.98H210V116.65H209V158.81H208V139.51H207V116.55H206V144.83H205V127.43H204V122.05H203V137.63H202V159.81H201V119.77H200V130H199V117.74H198V118.87H197V157.37H196V159.77H195V116.6H194V161.57H193V151.89H192V152.79H191V136.75H190V119.2H189V158.07H188V117.94H187V158.05H186V120.05H185V159.37H184V156.11H183V134.37H182V116.7H181V132.56H180V149.39H179V138.11H178V155.63H177V142.55H176V161.4H175V159.41H174V146.26H173V120.67H172V120.43H171V151.4H170V118.48H169V144.33H168V119.71H167V140.47H166V129.13H165V116.66H164V123.77H163V117.36H162V137.45H161V122.66H160V118.63H159V153.49H158V124.41H157V157.92H156V153.87H155V160.3H154V128.87H153V151.42H152V126.5H151V150.91H150V146.4H149V159.99H148V160.49H147V157.17H146V157.59H145V117.13H144V122.78H143V160.96H142V160.87H141V136.34H140V161.06H139V119.81H138V129.41H137V117.34H136V162.44H135V151.73H134V159.3H133V120.02H132V158.34H131V122.43H130V130.14H129V149.46H128V123.99H127V122.71H126V132.33H125V158.03H124V138.88H123V161.45H122V119.86H121V134.22H120ZM218 104.9H341V129.15H340V160.01H339V126.46H338V150.51H337V136.71H336V121.53H335V144.72H334V118.75H333V157.95H332V120.76H331V160.79H330V117.61H329V158.72H328V133.44H327V128.92H326V151.01H325V160.18H324V146.02H323V161.28H322V149.4H321V125.63H320V126.6H319V160.01H318V161.41H317V132.75H316V122.66H315V151.7H314V157.98H313V129.07H312V152.65H311V120.05H310V130.24H309V154.01H308V154.7H307V135.46H306V124.33H305V159.95H304V161.1H303V139.49H302V121.45H301V157.67H300V136.05H299V152.89H298V128.6H297V130.83H296V130.13H295V116.81H294V119.56H293V116.59H292V139.77H291V157.16H290V160.15H289V118.32H288V122.25H287V162.35H286V124.49H285V137.52H284V132.19H283V133.68H282V146.13H281V158.81H280V157.68H279V126.65H278V162.06H277V135.81H276V157.76H275V134.37H274V139.54H273V123.12H272V116.55H271V159.06H270V159.16H269V158.67H268V119.15H267V153.65H266V156.03H265V148.04H264V118.97H263V132.19H262V136.47H261V121.4H260V126.61H259V156.12H258V130.55H257V158.53H256V158.28H255V135.39H254V158.68H253V119.41H252V128.09H251V156.17H250V139.54H249V142.41H248V124.81H247V121.65H246V117.54H245V117.19H244V159.83H243V119.64H242V160.09H241V158.98H240V123.62H239V153.76H238V158.96H237V117.49H236V140.51H235V117.78H234V124.36H233V159.32H232V117.36H231V126.15H230V159.97H229V116.83H228V144.17H227V125.61H226V143.13H225V128H224V159.42H223V160.43H222V142.5H221V130.47H220V116.98H219V157.84H218ZM343 104.9H465V129.18H464V153.65H463V135.19H462V160.43H461V147.89H460V117.56H459V161.37H458V132.19H457V123.49H456V116.53H455V130.75H454V159.89H453V130.44H452V126.98H451V151.83H450V158.42H449V138.32H448V119.12H447V127.75H446V162.34H445V134.15H444V145.51H443V131.79H442V158.92H441V159.57H440V143.55H439V159.16H438V138.99H437V141.34H436V157.33H435V125.71H434V125.03H433V161.93H432V147.95H431V118.53H430V123.21H429V129.21H428V140.06H427V121.32H426V127.57H425V123.81H424V125.55H423V160.81H422V137.65H421V142.77H420V152.74H419V148.73H418V119H417V149.96H416V117.34H415V133.12H414V161.78H413V148.46H412V162.45H411V143.26H410V154.55H409V132.15H408V139.47H407V131.68H406V138.37H405V158.95H404V119.67H403V162.43H402V155.83H401V128.46H400V133.59H399V124.22H398V125.82H397V160.16H396V162.23H395V146.96H394V116.55H393V144.18H392V142.62H391V162.16H390V127.04H389V158.64H388V157.26H387V160.43H386V121.83H385V140.97H384V122.9H383V159.97H382V157.21H381V137.74H380V160.21H379V118.38H378V128.04H377V124.66H376V146.58H375V161.76H374V160.87H373V158.77H372V122.96H371V148.18H370V123.92H369V148.56H368V159.7H367V160.73H366V125.66H365V126.49H364V137.2H363V155.97H362V134.51H361V130.09H360V159.14H359V160.2H358V160.65H357V131.33H356V117.64H355V139.53H354V123.39H353V157.12H352V150.6H351V118.89H350V118.62H349V157.81H348V145.13H347V153.06H346V158.97H345V157.98H344V159.09H343ZM468 104.9H590V120.97H589V128.93H588V141.25H587V141.04H586V157.63H585V118.92H584V126.42H583V144.48H582V132.82H581V139.36H580V122.58H579V118.63H578V135.14H577V148.93H576V120.19H575V122.09H574V157.55H573V128.65H572V123.32H571V157.33H570V129.49H569V129.4H568V161.35H567V161.76H566V124H565V130.07H564V160.9H563V143.67H562V157.37H561V128.54H560V124.14H559V117.08H558V159.97H557V144.67H556V159.6H555V155.62H554V121.52H553V130.27H552V124.64H551V123.13H550V140.56H549V140.99H548V116.65H547V155.28H546V161.77H545V144.43H544V162.4H543V154.61H542V116.65H541V146.85H540V153.67H539V124.98H538V155.43H537V121.94H536V117.54H535V159.73H534V159.72H533V134.2H532V160.2H531V159.79H530V121.27H529V135.24H528V126H527V119.8H526V158.19H525V117H524V162.19H523V129.69H522V119.22H521V158.21H520V134.6H519V116.96H518V126.11H517V160.72H516V154.5H515V158.11H514V147.83H513V146.24H512V158.22H511V158.18H510V139.92H509V161.82H508V121.42H507V119.62H506V124.72H505V116.58H504V157.27H503V144.39H502V116.66H501V159.85H500V140.53H499V150.17H498V141.4H497V159.67H496V131.42H495V132.42H494V157.14H493V162.44H492V117.31H491V134.52H490V121.27H489V145.39H488V136.63H487V122.69H486V158.6H485V142.73H484V140.72H483V136.65H482V117.79H481V133.83H480V161.14H479V157.29H478V161.53H477V158.42H476V130.59H475V132.37H474V160.21H473V140.73H472V116.74H471V159.27H470V157.63H469V157.62H468ZM593 104.9H715V122.44H714V116.59H713V157.26H712V117.31H711V158.56H710V120.39H709V161.42H708V136.22H707V130.21H706V145.03H705V160.98H704V126.48H703V158.73H702V116.75H701V141.89H700V128.73H699V118.43H698V157.65H697V119.68H696V162.43H695V117.98H694V127.73H693V161.86H692V149.41H691V128.81H690V148.22H689V132.16H688V130.27H687V162.46H686V161.44H685V157.07H684V116.58H683V124.38H682V158.58H681V121.04H680V157.76H679V161.39H678V149.29H677V138.54H676V127.48H675V136.82H674V125.98H673V157.51H672V128.03H671V160.03H670V159.76H669V137.06H668V120.53H667V120.47H666V157.19H665V116.99H664V117.19H663V161.87H662V129.04H661V160.72H660V125.54H659V147.01H658V158.22H657V160.3H656V145.34H655V135.29H654V125.05H653V157.87H652V118.11H651V148.18H650V139.94H649V119.26H648V119.01H647V124.08H646V159.64H645V158.79H644V120.25H643V157.99H642V158.76H641V159.21H640V158.76H639V136.44H638V144.85H637V141.26H636V153.13H635V155.06H634V116.54H633V126.73H632V119.42H631V157.6H630V157.24H629V157.88H628V143.76H627V161.75H626V144.86H625V118.92H624V132.87H623V137.55H622V158.58H621V162.04H620V160.93H619V154.78H618V122.09H617V158.09H616V142.58H615V156.17H614V116.6H613V120.77H612V135.77H611V138.14H610V117.38H609V133.46H608V153.66H607V143.69H606V122.96H605V152.19H604V126.81H603V137.29H602V161.65H601V122.14H600V123.08H599V119.64H598V136.17H597V161.62H596V121.06H595V158.94H594V128.85H593ZM717 104.9H840V159.77H839V147.08H838V118.04H837V153.26H836V131.06H835V149.3H834V157.27H833V134.26H832V161.78H831V160.91H830V121.39H829V122.45H828V123.04H827V136.12H826V133.9H825V119.3H824V162.38H823V160.91H822V130.62H821V134.24H820V143.55H819V157.08H818V157.69H817V126.12H816V157.22H815V123.3H814V160.53H813V158.24H812V123.22H811V133.89H810V132.27H809V121.02H808V126.38H807V136.35H806V158.99H805V121.53H804V135.3H803V161.78H802V122.77H801V157.06H800V158.11H799V122.09H798V116.95H797V158.51H796V161.55H795V159.51H794V128.9H793V159.28H792V131.72H791V154.07H790V128.48H789V117.07H788V148.78H787V161.77H786V148.31H785V160.53H784V157.68H783V157.83H782V116.97H781V159.64H780V142.08H779V159.15H778V159.42H777V136.97H776V161.84H775V159.02H774V162.32H773V160.77H772V117.9H771V125.95H770V121.27H769V157.88H768V162.3H767V125.24H766V135.13H765V140.13H764V131.3H763V116.5H762V157.53H761V153.93H760V136.52H759V126.6H758V136.4H757V158.14H756V150.63H755V158.91H754V123.16H753V120.16H752V118.36H751V127H750V152.46H749V135.85H748V136.77H747V158.19H746V139.6H745V125.42H744V140.06H743V121.63H742V159.47H741V161.95H740V139.45H739V130.92H738V161.02H737V149.15H736V162.34H735V159.88H734V142.17H733V161.32H732V161.01H731V125.25H730V148.44H729V130.26H728V118.35H727V116.76H726V157.43H725V158.22H724V161.14H723V116.97H722V150.14H721V139.91H720V144.05H719V116.66H718V116.62H717ZM842 104.9H964V139.58H963V131.76H962V117.68H961V127.05H960V159.75H959V139.23H958V140.89H957V159.73H956V125.31H955V146.88H954V159.45H953V116.52H952V161.82H951V121.28H950V120.65H949V121.46H948V160H947V159.25H946V119.54H945V160.2H944V159.82H943V154.59H942V136.21H941V160.26H940V155.95H939V137.87H938V153.6H937V140.12H936V159.59H935V162.39H934V124.18H933V126.7H932V122.32H931V146.75H930V160.33H929V157.84H928V133.4H927V157.06H926V117.17H925V117.05H924V120.75H923V142.58H922V125.12H921V146.12H920V131.59H919V117.55H918V157.4H917V156.11H916V141.35H915V149.82H914V138H913V118.19H912V143.46H911V128.16H910V157.91H909V162.23H908V116.82H907V131.96H906V117.44H905V160.05H904V127.03H903V136.65H902V158.32H901V138.93H900V159.39H899V133.49H898V126.9H897V161.19H896V160.52H895V158.82H894V117.96H893V132.52H892V117.45H891V118.13H890V117.69H889V117.45H888V156.16H887V160.39H886V159.31H885V158.99H884V153.45H883V141.93H882V124.7H881V119.69H880V152.57H879V127.31H878V118.94H877V133.82H876V162.19H875V158.59H874V154.87H873V158.4H872V159.07H871V139.9H870V157.09H869V155.76H868V134.09H867V129.13H866V144.97H865V124.12H864V136.52H863V157.55H862V148.37H861V138.45H860V158.02H859V146.8H858V158.27H857V116.56H856V158.2H855V130.57H854V133.81H853V121.72H852V159.64H851V124.05H850V131.12H849V155.28H848V117.91H847V141.43H846V160.73H845V159.97H844V131.9H843V144.03H842ZM967 104.9H1001V126.98H1000V145.18H999V146.54H998V162.42H997V159.99H996V157.4H995V158.34H994V158.74H993V128.38H992V148.76H991V151.9H990V116.84H989V159.49H988V130.2H987V120.63H986V154.27H985V159.91H984V117.08H983V116.53H982V159.4H981V149.49H980V137.87H979V127.8H978V117H977V118.94H976V131.09H975V116.65H974V118.34H973V160.13H972V156.08H971V146.29H970V136.88H969V142.49H968V161.5H967ZM121 103.89h1V104.9h-1ZM123 103.73h1V104.9h-1ZM128 103.95h1V104.9h-1ZM129 103.66h1V104.9h-1ZM131 103.71h1V104.9h-1ZM143 103.91h1V104.9h-1ZM144 103.85h1V104.9h-1ZM164 104.07h1V104.9h-1ZM166 103.77h1V104.9h-1ZM168 103.45h1V104.9h-1ZM174 103.53h1V104.9h-1ZM175 104h1V104.9h-1ZM185 103.55h1V104.9h-1ZM199 103.61h1V104.9h-1ZM212 103.45h1V104.9h-1ZM213 103.44h1V104.9h-1ZM215 103.93h1V104.9h-1ZM219 103.47h1V104.9h-1ZM234 103.71h1V104.9h-1ZM237 103.6h1V104.9h-1ZM244 103.58h1V104.9h-1ZM253 104.06h1V104.9h-1ZM254 103.97h1V104.9h-1ZM264 103.76h1V104.9h-1ZM275 103.82h1V104.9h-1ZM276 103.82h1V104.9h-1ZM281 103.56h1V104.9h-1ZM300 103.61h1V104.9h-1ZM301 103.46h1V104.9h-1ZM310 103.59h1V104.9h-1ZM311 103.61h1V104.9h-1ZM318 103.78h1V104.9h-1ZM319 103.71h1V104.9h-1ZM327 103.88h1V104.9h-1ZM330 103.81h1V104.9h-1ZM332 103.93h1V104.9h-1ZM333 104.08h1V104.9h-1ZM336 103.86h1V104.9h-1ZM346 103.48h1V104.9h-1ZM359 103.75h1V104.9h-1ZM364 103.75h1V104.9h-1ZM372 104.05h1V104.9h-1ZM379 103.62h1V104.9h-1ZM380 103.6h1V104.9h-1ZM381 103.87h1V104.9h-1ZM384 104.03h1V104.9h-1ZM385 103.7h1V104.9h-1ZM387 103.97h1V104.9h-1ZM391 104.05h1V104.9h-1ZM399 104h1V104.9h-1ZM420 103.86h1V104.9h-1ZM433 103.66h1V104.9h-1ZM438 103.65h1V104.9h-1ZM442 103.74h1V104.9h-1ZM452 103.52h1V104.9h-1ZM453 103.84h1V104.9h-1ZM454 103.82h1V104.9h-1ZM457 103.92h1V104.9h-1ZM460 103.57h1V104.9h-1ZM461 103.45h1V104.9h-1ZM479 103.61h1V104.9h-1ZM490 103.44h1V104.9h-1ZM496 103.89h1V104.9h-1ZM500 103.49h1V104.9h-1ZM509 103.57h1V104.9h-1ZM513 103.46h1V104.9h-1ZM517 103.97h1V104.9h-1ZM530 103.59h1V104.9h-1ZM531 103.62h1V104.9h-1ZM544 103.59h1V104.9h-1ZM551 103.5h1V104.9h-1ZM561 103.8h1V104.9h-1ZM563 104.05h1V104.9h-1ZM579 103.66h1V104.9h-1ZM580 103.68h1V104.9h-1ZM583 103.84h1V104.9h-1ZM595 103.61h1V104.9h-1ZM596 103.85h1V104.9h-1ZM597 104.09h1V104.9h-1ZM604 103.54h1V104.9h-1ZM613 103.57h1V104.9h-1ZM615 103.54h1V104.9h-1ZM622 103.76h1V104.9h-1ZM627 103.52h1V104.9h-1ZM631 103.7h1V104.9h-1ZM640 103.66h1V104.9h-1ZM644 103.6h1V104.9h-1ZM649 104.07h1V104.9h-1ZM655 103.77h1V104.9h-1ZM656 103.68h1V104.9h-1ZM664 103.55h1V104.9h-1ZM673 103.61h1V104.9h-1ZM679 103.92h1V104.9h-1ZM681 103.65h1V104.9h-1ZM683 103.81h1V104.9h-1ZM685 103.81h1V104.9h-1ZM687 103.73h1V104.9h-1ZM689 103.43h1V104.9h-1ZM695 103.52h1V104.9h-1ZM700 103.83h1V104.9h-1ZM707 103.41h1V104.9h-1ZM714 104.08h1V104.9h-1ZM722 103.71h1V104.9h-1ZM725 103.45h1V104.9h-1ZM727 103.87h1V104.9h-1ZM730 104.04h1V104.9h-1ZM732 103.42h1V104.9h-1ZM737 104.06h1V104.9h-1ZM741 104.1h1V104.9h-1ZM744 103.62h1V104.9h-1ZM755 103.58h1V104.9h-1ZM763 103.73h1V104.9h-1ZM771 103.61h1V104.9h-1ZM803 104.07h1V104.9h-1ZM811 103.55h1V104.9h-1ZM812 103.73h1V104.9h-1ZM821 103.48h1V104.9h-1ZM822 103.5h1V104.9h-1ZM824 103.72h1V104.9h-1ZM826 103.65h1V104.9h-1ZM832 103.41h1V104.9h-1ZM833 103.98h1V104.9h-1ZM843 104.08h1V104.9h-1ZM856 103.56h1V104.9h-1ZM870 103.75h1V104.9h-1ZM881 103.54h1V104.9h-1ZM885 103.63h1V104.9h-1ZM890 104.03h1V104.9h-1ZM893 103.45h1V104.9h-1ZM908 103.91h1V104.9h-1ZM913 104.07h1V104.9h-1ZM914 103.51h1V104.9h-1ZM931 104.03h1V104.9h-1ZM938 103.8h1V104.9h-1ZM939 103.45h1V104.9h-1ZM940 103.61h1V104.9h-1ZM952 103.93h1V104.9h-1ZM959 103.95h1V104.9h-1ZM960 103.62h1V104.9h-1ZM963 103.95h1V104.9h-1ZM968 103.42h1V104.9h-1ZM971 103.98h1V104.9h-1ZM975 103.65h1V104.9h-1ZM977 104.04h1V104.9h-1ZM983 103.67h1V104.9h-1ZM998 103.44h1V104.9h-1Z" fill="#0060a9"/>
  <path d="M163.1 104.9h0.8V107.99h-0.8ZM263.1 104.9h0.8V113.47h-0.8ZM278.1 104.9h0.8V110.11h-0.8ZM304.1 104.9h0.8V108.85h-0.8ZM325.1 104.9h0.8V110.87h-0.8ZM392.1 104.9h0.8V108.58h-0.8ZM502.1 104.9h0.8V107.44h-0.8ZM573.1 104.9h0.8V110.23h-0.8ZM609.1 104.9h0.8V108.09h-0.8ZM643.1 104.9h0.8V106.91h-0.8ZM691.1 104.9h0.8V111.28h-0.8ZM703.1 104.9h0.8V113.02h-0.8ZM752.1 104.9h0.8V109.31h-0.8ZM778.1 104.9h0.8V111.33h-0.8ZM834.1 104.9h0.8V107.33h-0.8ZM867.1 104.9h0.8V109.13h-0.8ZM884.1 104.9h0.8V112.93h-0.8ZM915.1 104.9h0.8V108.28h-0.8ZM991.1 104.9h0.8V107.12h-0.8Z" fill="#fff" fill-opacity="0.8"/>
  <path d="M121 258.86h1V309.06h-1ZM122 260.52h1V299.33h-1ZM125 310.7h1V317.74h-1ZM128 291.79h1V307.06h-1ZM130 314.67h1V317.33h-1ZM133 312.28h1V315.42h-1ZM134 261.51h1V305.77h-1ZM136 267.93h1V296.32h-1ZM138 285.58h1V300.55h-1ZM139 258.4h1V313.16h-1ZM140 264.27h1V273.14h-1ZM143 259.53h1V280.84h-1ZM144 306.8h1V310.84h-1ZM149 266.09h1V284.85h-1ZM151 315.42h1V317.68h-1ZM152 314.21h1V315.86h-1ZM154 258.11h1V303.1h-1ZM159 303.53h1V318.31h-1ZM160 314.02h1V315.73h-1ZM161 306.71h1V311.84h-1ZM165 294.95h1V301.47h-1ZM168 317.88h1V318.93h-1ZM171 312.87h1V318.19h-1ZM174 275.47h1V309.07h-1ZM175 289.52h1V296.89h-1ZM178 286.06h1V308.24h-1ZM179 263.26h1V284.75h-1ZM181 314.4h1V316.82h-1ZM182 279.82h1V291.56h-1ZM183 277.46h1V309.1h-1ZM184 315.94h1V318.47h-1ZM185 278.29h1V310.96h-1ZM187 315.08h1V317.74h-1ZM188 274.42h1V310.86h-1ZM189 264.02h1V299.64h-1ZM190 284.78h1V299.19h-1ZM193 289.27h1V313.46h-1ZM196 316.42h1V317.53h-1ZM199 304.39h1V318.13h-1ZM200 269.45h1V304.43h-1ZM204 311.68h1V314.47h-1ZM207 310.04h1V317.96h-1ZM208 270.61h1V289.43h-1ZM209 267.44h1V297.79h-1ZM211 260.27h1V292.1h-1ZM212 267.34h1V303.86h-1ZM215 303.5h1V311.5h-1ZM218 317.37h1V318.37h-1ZM219 280.89h1V312.31h-1ZM220 313.42h1V316.48h-1ZM221 265.49h1V299.27h-1ZM222 316.03h1V317.55h-1ZM223 312.46h1V317.75h-1ZM224 261.69h1V300.41h-1ZM229 278.2h1V305.61h-1ZM232 284h1V316.63h-1ZM234 279.93h1V302.53h-1ZM236 265.94h1V288.34h-1ZM237 258.48h1V313.93h-1ZM238 270.14h1V289.92h-1ZM239 265.28h1V301.4h-1ZM240 307.91h1V313.81h-1ZM242 314.45h1V318.07h-1ZM243 294.86h1V305.77h-1ZM244 297.91h1V304.97h-1ZM245 315.56h1V318.65h-1ZM249 316.44h1V318.61h-1ZM250 262.22h1V294.46h-1ZM251 284.84h1V317.81h-1ZM252 316.53h1V317.99h-1ZM255 271.23h1V276.16h-1ZM256 304.49h1V318.85h-1ZM259 278.79h1V300.39h-1ZM260 306.59h1V317.33h-1ZM261 287.61h1V318.95h-1ZM262 291.56h1V313.97h-1ZM264 276.91h1V303.65h-1ZM265 300.8h1V317.22h-1ZM266 282.37h1V292.34h-1ZM270 275.93h1V282.06h-1ZM271 262.59h1V316.55h-1ZM273 289.47h1V317.79h-1ZM277 268.17h1V309.83h-1ZM278 313.97h1V316.9h-1ZM279 313.26h1V315.05h-1ZM281 298.22h1V317.79h-1ZM282 310.04h1V315.68h-1ZM283 301.8h1V315.28h-1ZM286 259.01h1V316.95h-1ZM287 270.28h1V284.79h-1ZM289 270.49h1V298.32h-1ZM292 311.96h1V313.63h-1ZM294 258.47h1V315.93h-1ZM295 277.96h1V307.87h-1ZM299 317.49h1V318.5h-1ZM301 260.16h1V277.56h-1ZM302 277.9h1V294.02h-1ZM303 312.98h1V317.86h-1ZM304 266.15h1V301.79h-1ZM306 280.06h1V298.96h-1ZM307 258.02h1V299.4h-1ZM309 286.65h1V291.37h-1ZM311 314.06h1V315.71h-1ZM312 316.67h1V318.86h-1ZM313 281.65h1V292.6h-1ZM314 313.14h1V317.89h-1ZM317 287.71h1V291.33h-1ZM318 302.43h1V307.18h-1ZM320 279.11h1V308.94h-1ZM321 285.9h1V306.9h-1ZM324 278.38h1V301.12h-1ZM325 260.08h1V287.85h-1ZM326 279.81h1V306.03h-1ZM327 313.88h1V316.08h-1ZM331 276.42h1V318.55h-1ZM333 310.73h1V316.97h-1ZM335 316.24h1V318.65h-1ZM338 263.37h1V278.88h-1ZM340 261.73h1V297h-1ZM342 310.67h1V316.94h-1ZM343 313.18h1V317.68h-1ZM344 316.35h1V317.84h-1ZM349 313.16h1V317.04h-1ZM350 271.18h1V305.63h-1ZM351 317.24h1V318.83h-1ZM352 313.22h1V318.91h-1ZM353 275.2h1V314.01h-1ZM354 275.45h1V287.05h-1ZM355 280.53h1V295.88h-1ZM356 275.07h1V318.5h-1ZM357 313.79h1V316.79h-1ZM358 258.97h1V283.25h-1ZM361 265.57h1V271.71h-1ZM362 292.94h1V303.24h-1ZM363 278.75h1V299.48h-1ZM365 301.78h1V310.52h-1ZM366 308.03h1V317.71h-1ZM367 298.57h1V318.22h-1ZM370 288.89h1V306.86h-1ZM372 262.9h1V282.18h-1ZM377 303.11h1V313.42h-1ZM378 313.91h1V318.79h-1ZM379 308.98h1V313.28h-1ZM380 264.84h1V311.39h-1ZM382 258.22h1V281.64h-1ZM384 283.49h1V304.1h-1ZM385 262.9h1V301.3h-1ZM387 307.22h1V315.94h-1ZM388 268.62h1V318.4h-1ZM390 263.25h1V272.15h-1ZM391 280.76h1V300.51h-1ZM393 299.15h1V307.37h-1ZM395 298.09h1V310.42h-1ZM397 286.56h1V305.81h-1ZM398 298.05h1V309.75h-1ZM400 315.39h1V317.53h-1ZM401 270.1h1V289.4h-1ZM402 312.76h1V317.76h-1ZM405 264.27h1V287.92h-1ZM407 274.63h1V317.59h-1ZM410 279.1h1V295.5h-1ZM413 316.77h1V318.25h-1ZM414 306.56h1V311.87h-1ZM415 266.81h1V298.88h-1ZM419 309.74h1V315.21h-1ZM420 274.63h1V310.43h-1ZM421 281.61h1V294.31h-1ZM422 258.23h1V278.16h-1ZM424 283.97h1V313.81h-1ZM428 262.04h1V310.29h-1ZM431 284.38h1V306.47h-1ZM434 316.62h1V318.33h-1ZM437 312.82h1V316.79h-1ZM438 317.21h1V318.29h-1ZM439 296.82h1V313.03h-1ZM440 274.65h1V311.35h-1ZM441 298.21h1V311.07h-1ZM442 262.9h1V313.78h-1ZM443 271.42h1V306.12h-1ZM444 277.51h1V318.59h-1ZM446 259.24h1V305.41h-1ZM447 261.34h1V316.61h-1ZM453 311.62h1V319h-1ZM455 314.03h1V315.12h-1ZM457 312.24h1V318.58h-1ZM459 261.59h1V285.51h-1ZM460 265.25h1V276.96h-1ZM461 288.08h1V297.68h-1ZM463 298.43h1V312.46h-1ZM467 261.38h1V285.06h-1ZM469 287.66h1V316.89h-1ZM470 283h1V306.09h-1ZM478 260.67h1V285.9h-1ZM479 259.3h1V314.2h-1ZM482 270.09h1V318.84h-1ZM487 316.63h1V318.06h-1ZM489 314.77h1V317.23h-1ZM491 312.14h1V316.89h-1ZM493 305.71h1V314.45h-1ZM494 287.16h1V293.05h-1ZM495 314.55h1V316.11h-1ZM496 316.95h1V318.77h-1ZM498 274.1h1V282.39h-1ZM500 302.14h1V318.79h-1ZM501 281.64h1V303.58h-1ZM503 265.78h1V316.75h-1ZM504 277.19h1V286.55h-1ZM506 278.45h1V306.76h-1ZM510 289.75h1V318.22h-1ZM513 261.77h1V317.33h-1ZM516 276.1h1V309.21h-1ZM517 272.79h1V290.42h-1ZM519 314.27h1V318.99h-1ZM520 313.7h1V316.43h-1ZM521 260.58h1V309.21h-1ZM522 261.9h1V311.78h-1ZM523 272.86h1V275.57h-1ZM526 312.55h1V318.82h-1ZM527 280.81h1V286h-1ZM529 300.77h1V317.97h-1ZM530 310.45h1V318.95h-1ZM533 296.34h1V306.97h-1ZM535 315.47h1V318.83h-1ZM536 266.45h1V285.3h-1ZM537 261.44h1V296.6h-1ZM539 270.25h1V290.15h-1ZM540 297.82h1V299.64h-1ZM541 304.11h1V308.55h-1ZM542 258h1V292.37h-1ZM543 305.83h1V311.73h-1ZM544 310.79h1V314.83h-1ZM545 292.37h1V299.43h-1ZM546 308.3h1V317.1h-1ZM547 260.89h1V318.14h-1ZM548 287.27h1V312.23h-1ZM550 315.7h1V318.93h-1ZM551 267.81h1V311.09h-1ZM552 280.14h1V290.52h-1ZM553 300.4h1V313.8h-1ZM554 308.45h1V317.31h-1ZM556 261.94h1V277.53h-1ZM557 269.04h1V283.96h-1ZM558 317.09h1V318.21h-1ZM559 291.18h1V300.05h-1ZM562 301.41h1V308.45h-1ZM563 258.57h1V292.01h-1ZM564 260.73h1V286.56h-1ZM566 274.7h1V295.09h-1ZM569 305.07h1V307.4h-1ZM574 297.73h1V311.43h-1ZM575 260.95h1V302.38h-1ZM576 313.95h1V318.69h-1ZM578 312.13h1V316.41h-1ZM581 314.83h1V317.86h-1ZM582 262.16h1V307.57h-1ZM583 285.6h1V314.88h-1ZM584 309.06h1V315.33h-1ZM585 265.7h1V281.95h-1ZM592 305.5h1V314.91h-1ZM594 259.15h1V315.79h-1ZM596 270.56h1V305.29h-1ZM597 300.33h1V313.96h-1ZM598 298.55h1V308.79h-1ZM599 281.45h1V311.77h-1ZM600 296.2h1V311.44h-1ZM608 315.25h1V318.11h-1ZM609 317.16h1V318.69h-1ZM610 312.95h1V315.4h-1ZM612 270.04h1V305.33h-1ZM618 315.97h1V317.27h-1ZM619 272.66h1V295.87h-1ZM622 289.71h1V307.75h-1ZM624 301.16h1V305.18h-1ZM628 307.33h1V311.19h-1ZM629 298.27h1V313.59h-1ZM630 315.94h1V317.63h-1ZM631 278.72h1V304.46h-1ZM632 315.22h1V318.4h-1ZM634 262.04h1V289.41h-1ZM635 260.5h1V281.14h-1ZM636 283.97h1V300.3h-1ZM638 259.42h1V282.74h-1ZM639 295.43h1V312.67h-1ZM642 273.31h1V301.3h-1ZM645 297.24h1V302.19h-1ZM649 295.66h1V308.56h-1ZM652 270.35h1V287.34h-1ZM653 273.26h1V313.59h-1ZM654 309.76h1V318.55h-1ZM657 315.74h1V318.88h-1ZM660 272.59h1V290.02h-1ZM663 316.81h1V318.93h-1ZM664 274.57h1V290.83h-1ZM666 263.49h1V285.21h-1ZM667 272.45h1V309.05h-1ZM669 263.97h1V313.93h-1ZM670 299.72h1V318.24h-1ZM671 316.21h1V317.4h-1ZM673 266.21h1V308.27h-1ZM675 315.2h1V318.43h-1ZM676 313.68h1V315.78h-1ZM677 260.41h1V303.7h-1ZM678 264.8h1V273.45h-1ZM679 287.96h1V305.74h-1ZM680 313.65h1V316.54h-1ZM682 313.79h1V318.67h-1ZM684 314.06h1V318.1h-1ZM686 313.33h1V318.86h-1ZM689 279.2h1V291.7h-1ZM690 271.68h1V301.28h-1ZM694 311.73h1V318.75h-1ZM695 291.21h1V305.75h-1ZM696 291.73h1V314.53h-1ZM697 273.75h1V281.52h-1ZM699 263.15h1V301.12h-1ZM700 313.46h1V318.47h-1ZM703 303.07h1V314.77h-1ZM707 313.31h1V317.89h-1ZM708 291.42h1V314.4h-1ZM710 263.59h1V299.53h-1ZM712 313.81h1V318.56h-1ZM713 317.03h1V318.18h-1ZM714 315.43h1V318.29h-1ZM715 314.41h1V318.5h-1ZM716 283.34h1V306.52h-1ZM717 261.17h1V268.16h-1ZM719 268.58h1V307.77h-1ZM722 300.45h1V306.36h-1ZM724 282.07h1V317.97h-1ZM725 259.79h1V316.62h-1ZM726 308.88h1V316.85h-1ZM728 262.49h1V297h-1ZM729 312.06h1V316.43h-1ZM731 291.83h1V304.56h-1ZM732 294.36h1V299.75h-1ZM733 302.48h1V310.04h-1ZM735 258.86h1V310.13h-1ZM738 263.41h1V276.23h-1ZM740 317.42h1V318.48h-1ZM741 301.22h1V303.38h-1ZM742 312.47h1V316.07h-1ZM743 313.83h1V315.76h-1ZM744 309.99h1V313.25h-1ZM745 267.72h1V316.29h-1ZM747 283.38h1V310.5h-1ZM749 307.41h1V311.12h-1ZM750 311.72h1V318.33h-1ZM753 314.92h1V317.25h-1ZM759 317.02h1V318.6h-1ZM760 261.45h1V292.25h-1ZM763 313.94h1V317.74h-1ZM764 258.45h1V288.74h-1ZM766 260.01h1V264.7h-1ZM769 271.49h1V298.72h-1ZM770 303.7h1V308.86h-1ZM771 303.43h1V314.8h-1ZM775 286.43h1V311.49h-1ZM776 297.95h1V300.53h-1ZM777 295.25h1V315.68h-1ZM782 260.92h1V288.6h-1ZM783 281.05h1V303.05h-1ZM785 301.47h1V314.45h-1ZM786 314.5h1V318.21h-1ZM789 312.63h1V314.02h-1ZM793 258.09h1V274.03h-1ZM794 258.76h1V307.98h-1ZM795 283.89h1V315.91h-1ZM796 270.78h1V280.33h-1ZM797 261.76h1V289.31h-1ZM798 286.83h1V318.84h-1ZM801 300h1V314.35h-1ZM803 283.53h1V312.32h-1ZM804 315.72h1V318.76h-1ZM805 284.38h1V308.64h-1ZM806 292.95h1V305.08h-1ZM808 274.08h1V297.39h-1ZM811 281.98h1V303.48h-1ZM812 314.3h1V315.59h-1ZM813 299.26h1V308.47h-1ZM814 259.27h1V308.05h-1ZM817 263.9h1V298.11h-1ZM818 259.12h1V270.39h-1ZM823 292.54h1V317.26h-1ZM824 317.07h1V318.92h-1ZM825 295.62h1V307.46h-1ZM827 310.83h1V316.92h-1ZM828 303.06h1V312.32h-1ZM830 296.23h1V304.12h-1ZM831 312.5h1V317.56h-1ZM833 267.62h1V268.92h-1ZM834 312.19h1V314.28h-1ZM835 273.56h1V314.65h-1ZM837 298.24h1V314.36h-1ZM838 258.23h1V316.74h-1ZM839 273.71h1V295.95h-1ZM841 307.32h1V308.72h-1ZM842 277.09h1V294.08h-1ZM844 258.59h1V288.6h-1ZM845 287.72h1V316.99h-1ZM846 314.21h1V316.66h-1ZM848 312.47h1V317.4h-1ZM850 282.86h1V303.84h-1ZM852 314.17h1V317.05h-1ZM853 313.88h1V318.95h-1ZM860 298.8h1V310.17h-1ZM862 285.41h1V292.41h-1ZM863 311.9h1V313.34h-1ZM864 312.83h1V315.94h-1ZM865 266.37h1V286.48h-1ZM867 313.16h1V315.88h-1ZM870 281.03h1V318.95h-1ZM871 260.28h1V285.27h-1ZM874 315.1h1V316.8h-1ZM876 312.42h1V316.94h-1ZM877 313.47h1V317.98h-1ZM878 271.29h1V278.87h-1ZM880 278.82h1V292.58h-1ZM882 267.6h1V299.33h-1ZM883 260.37h1V290.45h-1ZM885 272.84h1V315.2h-1ZM887 296.86h1V304.61h-1ZM893 308.63h1V318.34h-1ZM894 286.74h1V287.98h-1ZM895 312.29h1V318.67h-1ZM896 291.65h1V298.68h-1ZM898 261.92h1V267.39h-1ZM899 305.15h1V318.88h-1ZM903 313.32h1V318.72h-1ZM904 259.49h1V285.97h-1ZM908 268.73h1V297.63h-1ZM910 275.71h1V306.25h-1ZM911 266.7h1V305.72h-1ZM912 313.6h1V314.97h-1ZM915 260.08h1V304.82h-1ZM916 262.14h1V284.35h-1ZM918 275.76h1V315.82h-1ZM920 301.38h1V313.11h-1ZM921 264.43h1V267.12h-1ZM922 280.65h1V292.21h-1ZM923 272.92h1V293.76h-1ZM925 294.36h1V306.3h-1ZM926 264h1V305.76h-1ZM929 262.06h1V289.71h-1ZM931 298.81h1V312.42h-1ZM934 315.1h1V318.92h-1ZM935 311.81h1V315.59h-1ZM936 259.53h1V315.29h-1ZM939 258.83h1V269.3h-1ZM943 259.77h1V287.95h-1ZM944 312.13h1V313.88h-1ZM945 312.75h1V316.95h-1ZM947 258.57h1V314.14h-1ZM949 312.23h1V318.13h-1ZM950 263.86h1V318.47h-1ZM951 290.76h1V315.25h-1ZM952 269.98h1V315.16h-1ZM955 258.19h1V285.12h-1ZM957 265.66h1V295.7h-1ZM959 279.5h1V317.83h-1ZM961 275.37h1V305.86h-1ZM963 267.45h1V308.36h-1ZM964 313.86h1V317.08h-1ZM966 316.61h1V317.81h-1ZM968 311.81h1V315h-1ZM969 302.96h1V317.15h-1ZM970 314.44h1V318.95h-1ZM973 263.48h1V285.86h-1ZM974 312.43h1V314.65h-1ZM977 295.1h1V306.25h-1ZM980 277.5h1V317.54h-1ZM981 266.9h1V269.13h-1ZM983 267.09h1V317.6h-1ZM984 305.89h1V308.78h-1ZM985 269.55h1V314.21h-1ZM987 312.12h1V318.75h-1ZM988 258.25h1V291.21h-1ZM990 259.15h1V308.65h-1ZM991 301.4h1V310.4h-1ZM993 266.5h1V295.98h-1ZM994 277.11h1V311.42h-1ZM995 314.99h1V317.33h-1ZM999 274.95h1V285.29h-1ZM1000 280.57h1V315.32h-1Z" fill="#eb0029" fill-opacity="0.3"/>
  <path d="M120 242.8H1001V280.57H1000V274.95H999V312.32H998V264.69H997V271.85H996V314.99H995V277.11H994V266.5H993V282.76H992V301.4H991V259.15H990V284.46H989V258.25H988V312.12H987V265.59H986V269.55H985V305.89H984V267.09H983V258.22H982V266.9H981V277.5H980V278.44H979V313.52H978V295.1H977V269.13H976V313.97H975V312.43H974V263.48H973V318.22H972V293.16H971V314.44H970V302.96H969V311.81H968V318.46H967V316.61H966V318.13H965V313.86H964V267.45H963V264.58H962V275.37H961V310.31H960V279.5H959V273.2H958V265.66H957V312.2H956V258.19H955V270.29H954V261.51H953V269.98H952V290.76H951V263.86H950V312.23H949V314.91H948V258.57H947V263.3H946V312.75H945V312.13H944V259.77H943V313.31H942V265.43H941V315H940V258.83H939V317.59H938V283.97H937V259.53H936V311.81H935V315.1H934V260H933V307.11H932V298.81H931V315.02H930V262.06H929V317.52H928V310.8H927V264H926V294.36H925V260.89H924V272.92H923V280.65H922V264.43H921V301.38H920V315.42H919V275.76H918V268.59H917V262.14H916V260.08H915V313.42H914V262.93H913V313.6H912V266.7H911V275.71H910V271.11H909V268.73H908V268.55H907V316.28H906V292.25H905V259.49H904V313.32H903V318.05H902V314.1H901V261.67H900V305.15H899V261.92H898V295.94H897V291.65H896V312.29H895V286.74H894V308.63H893V303.5H892V288.88H891V312.31H890V315.6H889V305.48H888V296.86H887V261.37H886V272.84H885V258.04H884V260.37H883V267.6H882V273.34H881V278.82H880V310.73H879V271.29H878V313.47H877V312.42H876V281.33H875V315.1H874V284.55H873V282.5H872V260.28H871V281.03H870V282.81H869V305.91H868V313.16H867V311.7H866V266.37H865V312.83H864V311.9H863V285.41H862V281.13H861V298.8H860V296.77H859V259.9H858V304.67H857V267.55H856V259.89H855V285.92H854V313.88H853V314.17H852V310.7H851V282.86H850V286.83H849V312.47H848V285.06H847V314.21H846V287.72H845V258.59H844V315.6H843V277.09H842V307.32H841V277.18H840V273.71H839V258.23H838V298.24H837V317.81H836V273.56H835V312.19H834V267.62H833V317.19H832V312.5H831V296.23H830V313.99H829V303.06H828V310.83H827V312.97H826V295.62H825V317.07H824V292.54H823V312.29H822V265H821V268.08H820V310.5H819V259.12H818V263.9H817V280.26H816V316.69H815V259.27H814V299.26H813V314.3H812V281.98H811V314.51H810V264.12H809V274.08H808V317.94H807V292.95H806V284.38H805V315.72H804V283.53H803V308.1H802V300H801V266.51H800V258.46H799V286.83H798V261.76H797V270.78H796V283.89H795V258.76H794V258.09H793V316.21H792V314.89H791V309.22H790V312.63H789V288.33H788V313.84H787V314.5H786V301.47H785V316.41H784V281.05H783V260.92H782V264.81H781V281.7H780V277.54H779V314.99H778V295.25H777V297.95H776V286.43H775V258.99H774V318.88H773V318.07H772V303.43H771V303.7H770V271.49H769V284.25H768V314.77H767V260.01H766V297.72H765V258.45H764V313.94H763V258H762V306.94H761V261.45H760V317.02H759V287.62H758V276H757V258.33H756V292.68H755V294.08H754V314.92H753V265.26H752V258.65H751V311.72H750V307.41H749V275.85H748V283.38H747V270.72H746V267.72H745V309.99H744V313.83H743V312.47H742V301.22H741V317.42H740V258.21H739V263.41H738V318.21H737V288.55H736V258.86H735V268.9H734V302.48H733V294.36H732V291.83H731V267.62H730V312.06H729V262.49H728V301.16H727V308.88H726V259.79H725V282.07H724V310.74H723V300.45H722V264.35H721V287.06H720V268.58H719V283.32H718V261.17H717V283.34H716V314.41H715V315.43H714V317.03H713V313.81H712V258.64H711V263.59H710V317.09H709V291.42H708V313.31H707V314.79H706V317.54H705V312.14H704V303.07H703V260.66H702V267.06H701V313.46H700V263.15H699V292.69H698V273.75H697V291.73H696V291.21H695V311.73H694V316.61H693V315.94H692V301.36H691V271.68H690V279.2H689V261.88H688V291.43H687V313.33H686V284.71H685V314.06H684V277.14H683V313.79H682V263.56H681V313.65H680V287.96H679V264.8H678V260.41H677V313.68H676V315.2H675V281.15H674V266.21H673V263.99H672V316.21H671V299.72H670V263.97H669V300.92H668V272.45H667V263.49H666V303.69H665V274.57H664V316.81H663V312.45H662V306.89H661V272.59H660V307.49H659V315.25H658V315.74H657V263.9H656V317.68H655V309.76H654V273.26H653V270.35H652V312.55H651V279.06H650V295.66H649V312.74H648V316.68H647V296.68H646V297.24H645V282.34H644V285.53H643V273.31H642V314.83H641V277.69H640V295.43H639V259.42H638V302.9H637V283.97H636V260.5H635V262.04H634V275.66H633V315.22H632V278.72H631V315.94H630V298.27H629V307.33H628V293.98H627V269.54H626V312.14H625V301.16H624V314.53H623V289.71H622V286.97H621V270.34H620V272.66H619V315.97H618V282.16H617V275.55H616V307.3H615V298.04H614V266.1H613V270.04H612V259.59H611V312.95H610V317.16H609V315.25H608V308.28H607V293.7H606V258.61H605V316.58H604V302.7H603V266.48H602V316.54H601V296.2H600V281.45H599V298.55H598V300.33H597V270.56H596V314.41H595V259.15H594V276.33H593V305.5H592V297.19H591V273.31H590V312.46H589V312.99H588V316.5H587V298.41H586V265.7H585V309.06H584V285.6H583V262.16H582V314.83H581V307.16H580V258.08H579V312.13H578V290.07H577V313.95H576V260.95H575V297.73H574V291.71H573V308.09H572V274.96H571V317.95H570V305.07H569V261.68H568V312.21H567V274.7H566V318.29H565V260.73H564V258.57H563V301.41H562V269.71H561V317.26H560V291.18H559V317.09H558V269.04H557V261.94H556V314.25H555V308.45H554V300.4H553V280.14H552V267.81H551V315.7H550V263.54H549V287.27H548V260.89H547V308.3H546V292.37H545V310.79H544V305.83H543V258H542V304.11H541V297.82H540V270.25H539V315.38H538V261.44H537V266.45H536V315.47H535V281.92H534V296.34H533V281.97H532V314.57H531V310.45H530V300.77H529V318.81H528V280.81H527V312.55H526V313.27H525V313.74H524V272.86H523V261.9H522V260.58H521V313.7H520V314.27H519V313.88H518V272.79H517V276.1H516V313.63H515V278.06H514V261.77H513V311.4H512V287.21H511V289.75H510V315.62H509V286.47H508V298.3H507V278.45H506V265.22H505V277.19H504V265.78H503V289.18H502V281.64H501V302.14H500V268.11H499V274.1H498V270.96H497V316.95H496V314.55H495V287.16H494V305.71H493V261.32H492V312.14H491V270.93H490V314.77H489V286.19H488V316.63H487V317.4H486V264.19H485V314.27H484V317.89H483V270.09H482V312.96H481V283.71H480V259.3H479V260.67H478V262.74H477V262.23H476V316.57H475V317.14H474V297.16H473V258.72H472V318.92H471V283H470V287.66H469V275.89H468V261.38H467V287.94H466V314.63H465V265.96H464V298.43H463V275.5H462V288.08H461V265.25H460V261.59H459V259.11H458V312.24H457V318.53H456V314.03H455V313.72H454V311.62H453V318.94H452V286.44H451V267.7H450V258.92H449V300.94H448V261.34H447V259.24H446V258.27H445V277.51H444V271.42H443V262.9H442V298.21H441V274.65H440V296.82H439V317.21H438V312.82H437V312.72H436V313.19H435V316.62H434V272.96H433V304.92H432V284.38H431V313.05H430V290.58H429V262.04H428V307.2H427V318.09H426V312.75H425V283.97H424V259.96H423V258.23H422V281.61H421V274.63H420V309.74H419V259.18H418V291.63H417V265.36H416V266.81H415V306.56H414V316.77H413V258.23H412V317.91H411V279.1H410V317.62H409V299.88H408V274.63H407V318.19H406V264.27H405V318.87H404V318.78H403V312.76H402V270.1H401V315.39H400V299.29H399V298.05H398V286.56H397V259.45H396V298.09H395V289.92H394V299.15H393V295.65H392V280.76H391V263.25H390V265.11H389V268.62H388V307.22H387V277.76H386V262.9H385V283.49H384V317.63H383V258.22H382V293.91H381V264.84H380V308.98H379V313.91H378V303.11H377V312.26H376V272.16H375V296.57H374V308.6H373V262.9H372V264.01H371V288.89H370V268.03H369V273.8H368V298.57H367V308.03H366V301.78H365V306.8H364V278.75H363V292.94H362V265.57H361V262.93H360V312.62H359V258.97H358V313.79H357V275.07H356V280.53H355V275.45H354V275.2H353V313.22H352V317.24H351V271.18H350V313.16H349V272.59H348V270.53H347V263.77H346V317.41H345V316.35H344V313.18H343V310.67H342V317.56H341V261.73H340V318.11H339V263.37H338V319H337V312.14H336V316.24H335V270.85H334V310.73H333V313.02H332V276.42H331V259.02H330V317.44H329V313.99H328V313.88H327V279.81H326V260.08H325V278.38H324V281.06H323V316.74H322V285.9H321V279.11H320V315.26H319V302.43H318V287.71H317V265.92H316V265.38H315V313.14H314V281.65H313V316.67H312V314.06H311V318.47H310V286.65H309V260.66H308V258.02H307V280.06H306V266.31H305V266.15H304V312.98H303V277.9H302V260.16H301V316.59H300V317.49H299V313.67H298V313.13H297V310.9H296V277.96H295V258.47H294V317.91H293V311.96H292V316.18H291V317.73H290V270.49H289V310.75H288V270.28H287V259.01H286V314.03H285V318.34H284V301.8H283V310.04H282V298.22H281V278.26H280V313.26H279V313.97H278V268.17H277V296.03H276V316.57H275V258.39H274V289.47H273V270.53H272V262.59H271V275.93H270V307.39H269V312.74H268V292.13H267V282.37H266V300.8H265V276.91H264V272.63H263V291.56H262V287.61H261V306.59H260V278.79H259V292.26H258V264.84H257V304.49H256V271.23H255V267.35H254V284.35H253V316.53H252V284.84H251V262.22H250V316.44H249V317.03H248V316.44H247V318.31H246V315.56H245V297.91H244V294.86H243V314.45H242V296.49H241V307.91H240V265.28H239V270.14H238V258.48H237V265.94H236V312.24H235V279.93H234V318.18H233V284H232V267.24H231V275.84H230V278.2H229V304.21H228V265.22H227V315.8H226V306.05H225V261.69H224V312.46H223V316.03H222V265.49H221V313.42H220V280.89H219V317.37H218V260.12H217V302.64H216V303.5H215V315.04H214V315.65H213V267.34H212V260.27H211V282.38H210V267.44H209V270.61H208V310.04H207V318.53H206V260.68H205V311.68H204V264.38H203V276.09H202V285.18H201V269.45H200V304.39H199V273.71H198V303.01H197V316.42H196V291.93H195V286.12H194V289.27H193V273.15H192V281.14H191V284.78H190V264.02H189V274.42H188V315.08H187V265.65H186V278.29H185V315.94H184V277.46H183V279.82H182V314.4H181V311.18H180V263.26H179V286.06H178V277.96H177V304.27H176V289.52H175V275.47H174V295.65H173V301.7H172V312.87H171V258.93H170V316.98H169V317.88H168V280.87H167V318.33H166V294.95H165V311.9H164V279.06H163V313.35H162V306.71H161V314.02H160V303.53H159V276.81H158V308.31H157V295.34H156V268.04H155V258.11H154V312.85H153V314.21H152V315.42H151V313.27H150V266.09H149V283.43H148V314.32H147V266.91H146V275.95H145V306.8H144V259.53H143V311.93H142V283.41H141V264.27H140V258.4H139V285.58H138V315.75H137V267.93H136V272.76H135V261.51H134V312.28H133V314.66H132V302.2H131V314.67H130V275.68H129V291.79H128V315.85H127V267.83H126V310.7H125V262.04H124V265.26H123V260.52H122V258.86H121V258.57H120ZM121 241.7h1V242.8h-1ZM127 241.37h1V242.8h-1ZM128 241.49h1V242.8h-1ZM149 241.92h1V242.8h-1ZM171 241.74h1V242.8h-1ZM183 241.65h1V242.8h-1ZM202 241.68h1V242.8h-1ZM231 241.64h1V242.8h-1ZM235 241.37h1V242.8h-1ZM245 241.72h1V242.8h-1ZM246 241.34h1V242.8h-1ZM255 241.7h1V242.8h-1ZM257 241.91h1V242.8h-1ZM269 241.67h1V242.8h-1ZM297 241.48h1V242.8h-1ZM305 241.95h1V242.8h-1ZM311 241.32h1V242.8h-1ZM330 241.8h1V242.8h-1ZM332 241.85h1V242.8h-1ZM333 241.37h1V242.8h-1ZM341 241.91h1V242.8h-1ZM345 241.41h1V242.8h-1ZM352 241.99h1V242.8h-1ZM355 241.36h1V242.8h-1ZM373 241.3h1V242.8h-1ZM374 241.39h1V242.8h-1ZM379 241.94h1V242.8h-1ZM389 241.7h1V242.8h-1ZM395 241.61h1V242.8h-1ZM399 241.92h1V242.8h-1ZM407 241.37h1V242.8h-1ZM414 241.66h1V242.8h-1ZM415 241.8h1V242.8h-1ZM418 241.48h1V242.8h-1ZM431 241.62h1V242.8h-1ZM433 241.96h1V242.8h-1ZM437 241.56h1V242.8h-1ZM452 241.86h1V242.8h-1ZM453 241.58h1V242.8h-1ZM468 241.62h1V242.8h-1ZM476 241.94h1V242.8h-1ZM477 241.43h1V242.8h-1ZM494 241.67h1V242.8h-1ZM508 241.95h1V242.8h-1ZM509 241.76h1V242.8h-1ZM557 241.79h1V242.8h-1ZM590 241.71h1V242.8h-1ZM591 241.84h1V242.8h-1ZM613 241.36h1V242.8h-1ZM619 241.88h1V242.8h-1ZM620 241.36h1V242.8h-1ZM639 241.63h1V242.8h-1ZM655 241.51h1V242.8h-1ZM678 241.57h1V242.8h-1ZM690 241.58h1V242.8h-1ZM724 241.38h1V242.8h-1ZM731 241.83h1V242.8h-1ZM735 241.57h1V242.8h-1ZM745 241.71h1V242.8h-1ZM759 241.82h1V242.8h-1ZM767 241.71h1V242.8h-1ZM783 241.69h1V242.8h-1ZM785 241.66h1V242.8h-1ZM798 241.68h1V242.8h-1ZM799 241.77h1V242.8h-1ZM800 241.67h1V242.8h-1ZM805 241.69h1V242.8h-1ZM810 241.32h1V242.8h-1ZM825 241.8h1V242.8h-1ZM829 241.91h1V242.8h-1ZM830 241.84h1V242.8h-1ZM833 241.76h1V242.8h-1ZM844 241.44h1V242.8h-1ZM847 241.88h1V242.8h-1ZM852 241.3h1V242.8h-1ZM854 241.37h1V242.8h-1ZM862 241.8h1V242.8h-1ZM863 241.78h1V242.8h-1ZM886 241.68h1V242.8h-1ZM888 241.55h1V242.8h-1ZM898 241.31h1V242.8h-1ZM918 241.48h1V242.8h-1ZM921 241.7h1V242.8h-1ZM932 241.76h1V242.8h-1ZM937 241.33h1V242.8h-1ZM958 241.96h1V242.8h-1ZM967 241.95h1V242.8h-1ZM978 241.66h1V242.8h-1ZM984 241.92h1V242.8h-1ZM990 241.9h1V242.8h-1ZM993 241.36h1V242.8h-1Z" fill="#eb0029"/>
  <path d="M221.1 242.8h0.8V249.88h-0.8ZM277.1 242.8h0.8V249.1h-0.8ZM356.1 242.8h0.8V251.07h-0.8ZM375.1 242.8h0.8V252.32h-0.8ZM393.1 242.8h0.8V250.12h-0.8ZM404.1 242.8h0.8V252.54h-0.8ZM467.1 242.8h0.8V248.86h-0.8ZM618.1 242.8h0.8V248.35h-0.8ZM720.1 242.8h0.8V251.51h-0.8ZM728.1 242.8h0.8V247.07h-0.8ZM755.1 242.8h0.8V251.7h-0.8ZM809.1 242.8h0.8V250.46h-0.8ZM879.1 242.8h0.8V245.87h-0.8ZM891.1 242.8h0.8V251.49h-0.8Z" fill="#fff" fill-opacity="0.8"/>
  <path d="M214.2 101h1.4V118h-1.4ZM217.3 118H218.5L218.4 249H217.1L216.7 212L215.6 210V186L216.6 172ZM338.92 101h1.4V118h-1.4ZM342.02 118H343.22L343.12 249H341.82L341.42 212L340.32 210V186L341.32 172ZM463.64 101h1.4V118h-1.4ZM466.74 118H467.94L467.84 249H466.54L466.14 212L465.04 210V186L466.04 172ZM588.36 101h1.4V118h-1.4ZM591.46 118H592.66L592.56 249H591.26L590.86 212L589.76 210V186L590.76 172ZM713.08 101h1.4V118h-1.4ZM716.18 118H717.38L717.28 249H715.98L715.58 212L714.48 210V186L715.48 172ZM837.8 101h1.4V118h-1.4ZM840.9 118H842.1L842 249H840.7L840.3 212L839.2 210V186L840.2 172ZM962.52 101h1.4V118h-1.4ZM965.62 118H966.82L966.72 249H965.42L965.02 212L963.92 210V186L964.92 172Z" fill="#0060a9"/>
  <path d="M215.3 150h1.1V186h-1.1ZM340.02 150h1.1V186h-1.1ZM464.74 150h1.1V186h-1.1ZM589.46 150h1.1V186h-1.1ZM714.18 150h1.1V186h-1.1ZM838.9 150h1.1V186h-1.1ZM963.62 150h1.1V186h-1.1Z" fill="#0060a9" fill-opacity="0.45"/>
  <!-- cursors -->
  <g stroke="#555" stroke-width="1" stroke-dasharray="9.3 3.55" stroke-dashoffset="6.45">
    <line x1="207.5" y1="43.5" x2="207.5" y2="511"/>
    <line x1="332.5" y1="43.5" x2="332.5" y2="511"/>
  </g>
  <!-- trigger diamond -->
  <path d="M207.4 181.2L210.5 184.3L207.4 187.4L204.3 184.3Z" fill="#fff200" stroke="#d6c200" stroke-width="0.5"/>
  <!-- channel A axis marker -->
  <path d="M100.2 39.6H121.2M100.2 48.2H121.2" stroke="#0d5ea8" stroke-width="1.2"/>
  <path d="M120.6 39L125.3 43.9L120.6 48.8Z" fill="#0d5ea8"/>
  <path d="M98.6 40.5V48" stroke="#cfe0ee" stroke-width="0.8"/>
  <!-- channel B marker at right edge -->
  <path d="M1000 40L996.5 43.6L1000 47.2Z" fill="#e8002a"/>
  <!-- magnifier -->
  <circle cx="980.2" cy="57.8" r="3.7" fill="none" stroke="#0d5a9c" stroke-width="1.7"/>
  <circle cx="980.2" cy="57.8" r="1.3" fill="#0d5a9c"/>
  <path d="M983 60.8L988.4 65.6" stroke="#0d5a9c" stroke-width="2.5" stroke-linecap="round"/>
  <!-- cursor tags -->
  <path d="M190 515.2Q190 514 191.2 514H203.5L207.5 510L211.5 514H223.5Q224.7 514 224.7 515.2V524.8Q224.7 526 223.5 526H191.2Q190 526 190 524.8Z" fill="#0d5a9c"/>
  <path d="M315 515.2Q315 514 316.2 514H328.5L332.5 510L336.5 514H347.5Q348.7 514 348.7 515.2V524.8Q348.7 526 347.5 526H316.2Q315 526 315 524.8Z" fill="#0d5a9c"/>
</svg>

<!-- y-axis labels -->
<div class="t" style="left:100px;width:21px;top:40.2px;font-size:8.2px;color:#2f6fb0;text-align:right">8.0</div>
<div class="t" style="left:103px;width:16px;top:49.5px;font-size:8.2px;color:#2f6fb0;text-align:right">V</div>
<div class="t" style="left:90px;width:30.2px;top:85.85px;font-size:8px;color:#2f6fb0;text-align:right">6.0</div>
<div class="t" style="left:90px;width:30.2px;top:132.92px;font-size:8px;color:#2f6fb0;text-align:right">4.0</div>
<div class="t" style="left:90px;width:30.2px;top:179.99px;font-size:8px;color:#2f6fb0;text-align:right">2.0</div>
<div class="t" style="left:90px;width:30.2px;top:227.06px;font-size:8px;color:#2f6fb0;text-align:right">0.0</div>
<div class="t" style="left:90px;width:30.2px;top:274.13px;font-size:8px;color:#2f6fb0;text-align:right">-2.0</div>
<div class="t" style="left:90px;width:30.2px;top:321.20px;font-size:8px;color:#2f6fb0;text-align:right">-4.0</div>
<div class="t" style="left:90px;width:30.2px;top:368.27px;font-size:8px;color:#2f6fb0;text-align:right">-6.0</div>
<div class="t" style="left:90px;width:30.2px;top:415.34px;font-size:8px;color:#2f6fb0;text-align:right">-8.0</div>
<div class="t" style="left:90px;width:30.2px;top:462.41px;font-size:8px;color:#2f6fb0;text-align:right">-10.0</div>

<!-- x-axis labels -->
<div class="t" style="left:112.4px;top:516.6px;font-size:8.4px;color:#222">-1.0 s</div>
<div class="t" style="left:276px;width:40px;top:516.6px;font-size:8.4px;color:#222;text-align:center">1.0</div>
<div class="t" style="left:364.3px;width:40px;top:516.6px;font-size:8.4px;color:#222;text-align:center">2.0</div>
<div class="t" style="left:452.5px;width:40px;top:516.6px;font-size:8.4px;color:#222;text-align:center">3.0</div>
<div class="t" style="left:540.7px;width:40px;top:516.6px;font-size:8.4px;color:#222;text-align:center">4.0</div>
<div class="t" style="left:628.9px;width:40px;top:516.6px;font-size:8.4px;color:#222;text-align:center">5.0</div>
<div class="t" style="left:717.1px;width:40px;top:516.6px;font-size:8.4px;color:#222;text-align:center">6.0</div>
<div class="t" style="left:805.3px;width:40px;top:516.6px;font-size:8.4px;color:#222;text-align:center">7.0</div>
<div class="t" style="left:893.5px;width:40px;top:516.6px;font-size:8.4px;color:#222;text-align:center">8.0</div>
<div class="t" style="left:981.7px;width:40px;top:516.6px;font-size:8.4px;color:#222;text-align:center">9.0</div>
<div class="t" style="left:190px;width:34.7px;top:516.3px;font-size:8px;color:#fff;text-align:center">-0.002 s</div>
<div class="t" style="left:315px;width:33.7px;top:516.3px;font-size:8px;color:#fff;text-align:center">1.415 s</div>

<div class="a" style="left:0;top:527px;width:1000px;height:1px;background:#bdbdbd"></div>

<!-- Rulers popup -->
<div class="a" style="left:479.5px;top:52.3px;width:169.1px;height:53.3px;background:#fff;border:1px solid #94bfe9;border-radius:3px 3px 2px 2px;overflow:hidden">
  <div style="position:absolute;left:0;top:0;width:170px;height:10.5px;background:#94bfe9"></div>
</div>
<svg width="1000" height="110" style="left:0;top:0">
  <g stroke="#a9c9ec" stroke-width="0.9">
    <path d="M480 75.3H648.5M480 89.5H648.5"/>
    <path d="M493.4 62.8V89.5M540.3 62.8V89.5M588.4 62.8V89.5M636.4 62.8V89.5"/>
    <path d="M496.4 91.8V105M516.5 91.8V105M564.2 91.8V105M631.6 91.8V105"/>
  </g>
  <path d="M496.4 91.6H631.6" stroke="#e6eef6" stroke-width="0.8"/>
  <path d="M628.8 58.6H635.6" stroke="#fff" stroke-width="1"/>
  <path d="M639.6 55.4L646.4 61.6M646.4 55.4L639.6 61.6" stroke="#fff" stroke-width="1.1"/>
  <!-- lock -->
  <rect x="639" y="80.8" width="5.6" height="4.7" rx="0.6" fill="#0d5a9c"/>
  <path d="M643.5 80.8V79.4A2 2 0 0 1 647.5 79.4V80" fill="none" stroke="#0d5a9c" stroke-width="0.9"/>
  <rect x="641.4" y="82.4" width="0.9" height="1.6" fill="#fff"/>
</svg>
<div class="t" style="left:481.8px;top:54.9px;font-size:7.6px;font-weight:bold;color:#fff">Rulers</div>
<div class="t" style="left:496.2px;top:65.8px;font-size:8px;color:#555">1</div>
<div class="t" style="left:542.8px;top:65.8px;font-size:8px;color:#555">2</div>
<div class="t" style="left:590.6px;top:65.8px;font-size:8px;color:#555">Δ</div>
<div class="t" style="left:495.3px;top:79.5px;font-size:8px;color:#2a68a8">1.415 s</div>
<div class="t" style="left:542.8px;top:79.5px;font-size:8px;color:#2a68a8">-2.185 ms</div>
<div class="t" style="left:590.6px;top:79.5px;font-size:8px;color:#555">1.417 s</div>
<div class="t" style="left:499.2px;top:95.5px;font-size:8px;color:#555">1/Δ</div>
<div class="t" style="left:524.2px;top:95.5px;font-size:8px;color:#555">705.5 mHz</div>
<div class="t" style="left:580px;width:49.4px;top:95.5px;font-size:8px;color:#555;text-align:right">42.3 RPM</div>

</body></html>
